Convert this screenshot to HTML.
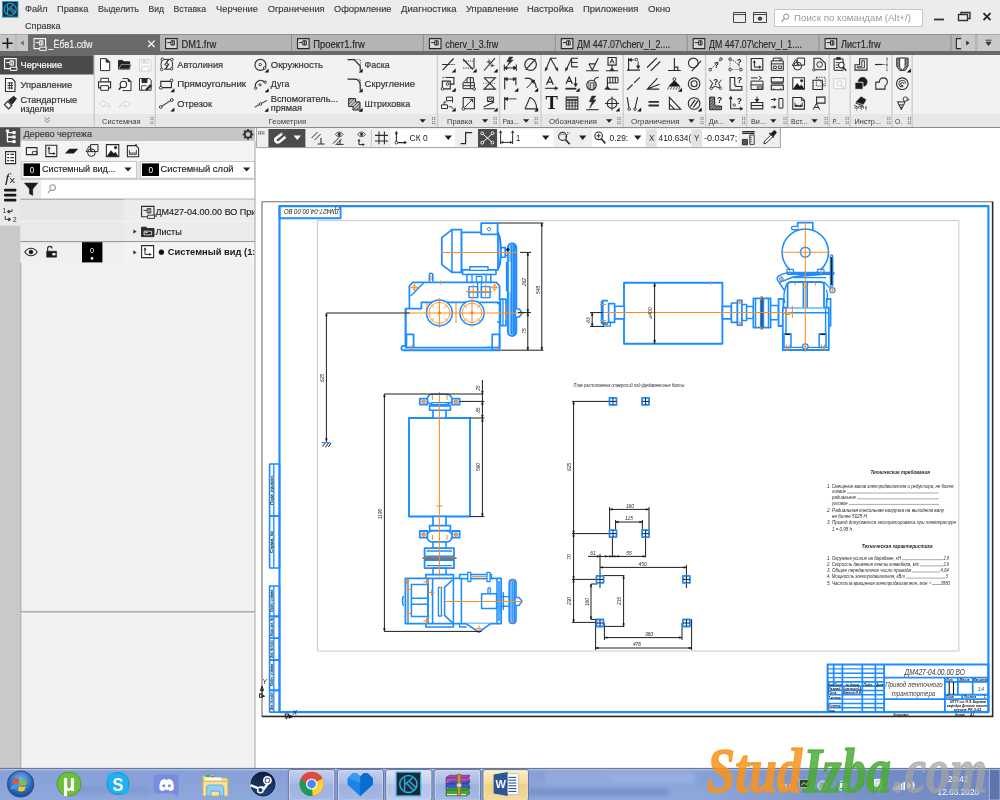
<!DOCTYPE html>
<html lang="ru"><head><meta charset="utf-8"><title>КОМПАС-3D</title>
<style>
html,body{margin:0;padding:0;background:#fff;overflow:hidden}
body{width:1000px;height:800px;font-family:"Liberation Sans",sans-serif}
svg{display:block;font-family:"Liberation Sans",sans-serif;will-change:transform;opacity:.9999}
</style></head><body>
<svg width="1000" height="800" viewBox="0 0 1000 800">
<rect x="0" y="0" width="1000" height="34" fill="#ececec" />
<rect x="2.4" y="1.5" width="15.6" height="15.6" fill="#26282c" stroke="#1aa3e6" stroke-width="0.9"/>
<circle cx="10.2" cy="9.3" r="6" fill="none" stroke="#1aa3e6" stroke-width="1.1"/>
<path d="M7.6 4.5V14 M7.6 9.6L13.2 4.9 M8.8 8.6L14 13.6 M10.5 7.6L15 11.8" stroke="#1aa3e6" stroke-width="1.1" fill="none" />
<text x="25" y="11.8" font-size="9.6" fill="#3a3a3a" textLength="22.6" lengthAdjust="spacingAndGlyphs" stroke="#3a3a3a" stroke-width="0.15" >Файл</text>
<text x="57" y="11.8" font-size="9.6" fill="#3a3a3a" textLength="31.4" lengthAdjust="spacingAndGlyphs" stroke="#3a3a3a" stroke-width="0.15" >Правка</text>
<text x="98" y="11.8" font-size="9.6" fill="#3a3a3a" textLength="41.0" lengthAdjust="spacingAndGlyphs" stroke="#3a3a3a" stroke-width="0.15" >Выделить</text>
<text x="148.5" y="11.8" font-size="9.6" fill="#3a3a3a" textLength="15.5" lengthAdjust="spacingAndGlyphs" stroke="#3a3a3a" stroke-width="0.15" >Вид</text>
<text x="173.5" y="11.8" font-size="9.6" fill="#3a3a3a" textLength="32.5" lengthAdjust="spacingAndGlyphs" stroke="#3a3a3a" stroke-width="0.15" >Вставка</text>
<text x="216" y="11.8" font-size="9.6" fill="#3a3a3a" textLength="42.0" lengthAdjust="spacingAndGlyphs" stroke="#3a3a3a" stroke-width="0.15" >Черчение</text>
<text x="267.7" y="11.8" font-size="9.6" fill="#3a3a3a" textLength="57.0" lengthAdjust="spacingAndGlyphs" stroke="#3a3a3a" stroke-width="0.15" >Ограничения</text>
<text x="334" y="11.8" font-size="9.6" fill="#3a3a3a" textLength="57.5" lengthAdjust="spacingAndGlyphs" stroke="#3a3a3a" stroke-width="0.15" >Оформление</text>
<text x="401" y="11.8" font-size="9.6" fill="#3a3a3a" textLength="55.5" lengthAdjust="spacingAndGlyphs" stroke="#3a3a3a" stroke-width="0.15" >Диагностика</text>
<text x="466" y="11.8" font-size="9.6" fill="#3a3a3a" textLength="52.5" lengthAdjust="spacingAndGlyphs" stroke="#3a3a3a" stroke-width="0.15" >Управление</text>
<text x="527" y="11.8" font-size="9.6" fill="#3a3a3a" textLength="46.5" lengthAdjust="spacingAndGlyphs" stroke="#3a3a3a" stroke-width="0.15" >Настройка</text>
<text x="583" y="11.8" font-size="9.6" fill="#3a3a3a" textLength="55.5" lengthAdjust="spacingAndGlyphs" stroke="#3a3a3a" stroke-width="0.15" >Приложения</text>
<text x="648" y="11.8" font-size="9.6" fill="#3a3a3a" textLength="22.5" lengthAdjust="spacingAndGlyphs" stroke="#3a3a3a" stroke-width="0.15" >Окно</text>
<text x="25" y="28.6" font-size="9.6" fill="#3a3a3a" textLength="35.5" lengthAdjust="spacingAndGlyphs" stroke="#3a3a3a" stroke-width="0.15" >Справка</text>
<path d="M733.5 12.5h12v10h-12z M733.5 14.5h12" stroke="#444" stroke-width="1" fill="none" />
<path d="M753.5 12.5h13v10h-13z M753.5 14.5h13" stroke="#444" stroke-width="1" fill="none" />
<circle cx="760" cy="18.6" r="2.2" fill="#444"/>
<rect x="774.5" y="9.5" width="148" height="17" fill="#ffffff" stroke="#c6c6c6" stroke-width="1"/>
<circle cx="786.2" cy="16.6" r="2.6" fill="none" stroke="#8a8a8a" stroke-width="1"/>
<line x1="784.4" y1="18.6" x2="781.6" y2="21.6" stroke="#8a8a8a" stroke-width="1.1" />
<text x="794" y="21.2" font-size="9.6" fill="#9a9a9a" textLength="117.0" lengthAdjust="spacingAndGlyphs" >Поиск по командам (Alt+/)</text>
<line x1="934" y1="19.5" x2="944" y2="19.5" stroke="#333" stroke-width="1.8" />
<path d="M958.5 14.5h9v6h-9z M961 14.5v-2h9v6h-2.5" stroke="#333" stroke-width="1.4" fill="none" />
<path d="M983.5 13.2l7 7M990.5 13.2l-7 7" stroke="#222" stroke-width="1.8" fill="none" />
<rect x="0" y="34" width="1000" height="21" fill="#6a6a6a" />
<rect x="0" y="34.5" width="1000" height="16.5" fill="#b4b4b4" />
<rect x="0" y="34.5" width="15.3" height="16.5" fill="#c6c6c6" />
<path d="M2.3 43.2h10.4M7.5 38v10.4" stroke="#1a1a1a" stroke-width="1.6" fill="none" />
<rect x="16.6" y="34.5" width="11.4" height="16.5" fill="#c6c6c6" />
<path d="M23.8 40.6v5l-3.4-2.5z" stroke="none" stroke-width="0" fill="#6a6a6a" />
<rect x="28" y="34.3" width="132" height="21" fill="#6a6a6a" />
<path d="M34.0 38.6h11.6v10h-11.6z" stroke="#f4f4f4" stroke-width="1.1" fill="none" />
<path d="M35.6 42.6h3.6 M39.4 40.8h3.4v4.2h-3.4z M41.199999999999996 40.8v4.2" stroke="#f4f4f4" stroke-width="1" fill="none" />
<path d="M39.699999999999996 47.2h6.6v3.2h-6.6z" stroke="#f4f4f4" stroke-width="1" fill="#6a6a6a" />
<text x="48.5" y="47.6" font-size="10.2" fill="#f4f4f4" textLength="44.0" lengthAdjust="spacingAndGlyphs" stroke="#f4f4f4" stroke-width="0.15" >_Ёбв1.cdw</text>
<path d="M148.2 40.6l6.4 6.4M154.6 40.6l-6.4 6.4" stroke="#fff" stroke-width="1.25" fill="none" />
<path d="M165.6 38.6h11.6v10h-11.6z" stroke="#2a2a2a" stroke-width="1.1" fill="#d8d8d8" />
<path d="M167.2 42.6h3.6 M171.0 40.8h3.4v4.2h-3.4z M172.8 40.8v4.2" stroke="#2a2a2a" stroke-width="1" fill="none" />
<text x="181.4" y="47.6" font-size="10.2" fill="#262626" textLength="35.0" lengthAdjust="spacingAndGlyphs" stroke="#262626" stroke-width="0.15" >DM1.frw</text>
<line x1="291.5" y1="34.5" x2="291.5" y2="51" stroke="#8e8e8e" stroke-width="1" />
<path d="M297.5 38.6h11.6v10h-11.6z" stroke="#2a2a2a" stroke-width="1.1" fill="#d8d8d8" />
<path d="M299.09999999999997 42.6h3.6 M302.9 40.8h3.4v4.2h-3.4z M304.7 40.8v4.2" stroke="#2a2a2a" stroke-width="1" fill="none" />
<text x="313.3" y="47.6" font-size="10.2" fill="#262626" textLength="51.5" lengthAdjust="spacingAndGlyphs" stroke="#262626" stroke-width="0.15" >Проект1.frw</text>
<line x1="423.4" y1="34.5" x2="423.4" y2="51" stroke="#8e8e8e" stroke-width="1" />
<path d="M429.4 38.6h11.6v10h-11.6z" stroke="#2a2a2a" stroke-width="1.1" fill="#d8d8d8" />
<path d="M430.99999999999994 42.6h3.6 M434.79999999999995 40.8h3.4v4.2h-3.4z M436.59999999999997 40.8v4.2" stroke="#2a2a2a" stroke-width="1" fill="none" />
<text x="445.2" y="47.6" font-size="10.2" fill="#262626" textLength="53.0" lengthAdjust="spacingAndGlyphs" stroke="#262626" stroke-width="0.15" >cherv_l_3.frw</text>
<line x1="555.3" y1="34.5" x2="555.3" y2="51" stroke="#8e8e8e" stroke-width="1" />
<path d="M561.3 38.6h11.6v10h-11.6z" stroke="#2a2a2a" stroke-width="1.1" fill="#d8d8d8" />
<path d="M562.9 42.6h3.6 M566.6999999999999 40.8h3.4v4.2h-3.4z M568.4999999999999 40.8v4.2" stroke="#2a2a2a" stroke-width="1" fill="none" />
<text x="577.0999999999999" y="47.6" font-size="10.2" fill="#262626" textLength="93.0" lengthAdjust="spacingAndGlyphs" stroke="#262626" stroke-width="0.15" >ДМ 447.07\cherv_l_2....</text>
<line x1="687.2" y1="34.5" x2="687.2" y2="51" stroke="#8e8e8e" stroke-width="1" />
<path d="M693.2 38.6h11.6v10h-11.6z" stroke="#2a2a2a" stroke-width="1.1" fill="#d8d8d8" />
<path d="M694.8000000000001 42.6h3.6 M698.6 40.8h3.4v4.2h-3.4z M700.4 40.8v4.2" stroke="#2a2a2a" stroke-width="1" fill="none" />
<text x="709.0" y="47.6" font-size="10.2" fill="#262626" textLength="93.0" lengthAdjust="spacingAndGlyphs" stroke="#262626" stroke-width="0.15" >ДМ 447.07\cherv_l_1....</text>
<line x1="819.1" y1="34.5" x2="819.1" y2="51" stroke="#8e8e8e" stroke-width="1" />
<path d="M825.1 38.6h11.6v10h-11.6z" stroke="#2a2a2a" stroke-width="1.1" fill="#d8d8d8" />
<path d="M826.7 42.6h3.6 M830.5 40.8h3.4v4.2h-3.4z M832.3 40.8v4.2" stroke="#2a2a2a" stroke-width="1" fill="none" />
<text x="840.9" y="47.6" font-size="10.2" fill="#262626" textLength="39.8" lengthAdjust="spacingAndGlyphs" stroke="#262626" stroke-width="0.15" >Лист1.frw</text>
<line x1="951" y1="34.5" x2="951" y2="51" stroke="#8e8e8e" stroke-width="1" />
<path d="M961 38.6h-4.6v10h4.6" stroke="#2a2a2a" stroke-width="1.1" fill="#d8d8d8" />
<rect x="961.5" y="34.5" width="13.5" height="16.5" fill="#cacaca" />
<path d="M966.2 40.4v5l3.4-2.5z" stroke="none" stroke-width="0" fill="#333" />
<rect x="977.5" y="34.5" width="22.5" height="16.5" fill="#cacaca" />
<path d="M985.5 40.2h6M986 42.2h5l-2.5 3.2z" stroke="#333" stroke-width="0.9" fill="#333" />
<rect x="0" y="55" width="1000" height="59" fill="#f2f2f2" />
<rect x="0" y="114" width="1000" height="13" fill="#e7e7e7" />
<rect x="0" y="127" width="1000" height="1.2" fill="#8c8c8c" />
<rect x="0" y="55.2" width="93.8" height="19.3" fill="#4a4a4a" />
<path d="M4.6 58.6h11.6v10h-11.6z" stroke="#fff" stroke-width="1.1" fill="none" />
<path d="M6.2 62.6h3.6 M10 60.8h3.4v4.2h-3.4z M11.8 60.8v4.2" stroke="#fff" stroke-width="1" fill="none" />
<path d="M10.3 67.2h6.6v3.2h-6.6z" stroke="#fff" stroke-width="1" fill="#4b4b4b" />
<text x="20.6" y="67.7" font-size="9.8" fill="#ffffff" textLength="41.5" lengthAdjust="spacingAndGlyphs" stroke="#ffffff" stroke-width="0.2" >Черчение</text>
<path d="M5.5 78.5h6.5l3 3v10h-9.5z" stroke="#2b2b2b" stroke-width="1.1" fill="#fff" />
<path d="M7.4 83h5.6M7.4 85.5h5.6M7.4 88h5.6M9.4 82v7.5M11.6 82v7.5" stroke="#2b2b2b" stroke-width="0.9" fill="none" />
<text x="20.6" y="87.5" font-size="9.8" fill="#333" textLength="51.5" lengthAdjust="spacingAndGlyphs" stroke="#333" stroke-width="0.2" >Управление</text>
<path d="M4.4 104.6l3.2-3.2 4.2 4.2-3.2 3.2z" stroke="#2b2b2b" stroke-width="1.2" fill="#fff" />
<path d="M8.4 100.6l5.4-4.4 2.6 2.6-4.4 5.4z" stroke="#2b2b2b" stroke-width="1" fill="#2b2b2b" />
<text x="20.6" y="102.9" font-size="9.8" fill="#333" textLength="56.5" lengthAdjust="spacingAndGlyphs" stroke="#333" stroke-width="0.2" >Стандартные</text>
<text x="20.6" y="111.6" font-size="9.8" fill="#333" textLength="33.5" lengthAdjust="spacingAndGlyphs" stroke="#333" stroke-width="0.2" >изделия</text>
<path d="M44.6 117.4l2.6 2.2 2.6-2.2M44.6 120.2l2.6 2.2 2.6-2.2" stroke="#777" stroke-width="0.9" fill="none" />
<rect x="93.6" y="55" width="1.4" height="72" fill="#cdcdcd" />
<rect x="154.60000000000002" y="55" width="1.4" height="72" fill="#cdcdcd" />
<text x="102" y="123.6" font-size="7.7" fill="#3c3c3c" textLength="38.5" lengthAdjust="spacingAndGlyphs" >Системная</text>
<rect x="150.3" y="117" width="1.1" height="1.1" fill="#777" />
<rect x="152.4" y="117" width="1.1" height="1.1" fill="#777" />
<rect x="150.3" y="118.8" width="1.1" height="1.1" fill="#777" />
<rect x="152.4" y="118.8" width="1.1" height="1.1" fill="#777" />
<rect x="150.3" y="121.2" width="1.1" height="1.1" fill="#777" />
<rect x="152.4" y="121.2" width="1.1" height="1.1" fill="#777" />
<rect x="150.3" y="123" width="1.1" height="1.1" fill="#777" />
<rect x="152.4" y="123" width="1.1" height="1.1" fill="#777" />
<path d="M100.5 58.6h5.600l3.600 3.600v8.400h-9.200z" stroke="#2b2b2b" stroke-width="1" fill="#fff" />
<path d="M106.1 58.6v3.600h3.600z" stroke="#2b2b2b" stroke-width="0.8" fill="#222" />
<path d="M118.5 60.4h4l1.2 1.4h6v7.4h-11.2z" stroke="#2b2b2b" stroke-width="1" fill="#222" />
<path d="M118.8 69.2l2.2-4.6h10.4l-2.2 4.6z" stroke="#f1f1f1" stroke-width="0.5" fill="#222" />
<path d="M139.5 59.5h10l1.6 1.6v10h-11.6z" stroke="#d4d4d4" stroke-width="1" fill="#f8f8f8" />
<path d="M141.8 59.5v3.6h6.4v-3.6 M141.6 71v-4.6h7.2v4.6" stroke="#d4d4d4" stroke-width="0.9" fill="none" />
<rect x="143" y="59.8" width="3" height="3" fill="#dcdcdc" />
<g transform="translate(0 -0.9)">
<path d="M100.8 82.6v-3.4h7.6v3.4" stroke="#2b2b2b" stroke-width="1" fill="#fff" />
<path d="M98.6 82.8h12v6h-12z" stroke="#2b2b2b" stroke-width="1.1" fill="#fff" />
<path d="M100.8 86.6h7.6v4.6h-7.6z" stroke="#2b2b2b" stroke-width="1" fill="#fff" />
<path d="M122.6 79.5h5.4l3 3v9h-8.4" stroke="#2b2b2b" stroke-width="1" fill="#fff" />
<path d="M128 79.5v3h3z" stroke="#2b2b2b" stroke-width="0.6" fill="#222" />
<circle cx="123.4" cy="85.3" r="3.2" fill="#fff" stroke="#2b2b2b" stroke-width="1.1"/>
<line x1="121" y1="87.8" x2="118.8" y2="90.6" stroke="#2b2b2b" stroke-width="1.5" />
<path d="M139.5 79.5h10l1.6 1.6v10h-11.6z" stroke="#2b2b2b" stroke-width="1" fill="#fff" />
<path d="M142 79.6v4h5v-4z" stroke="#2b2b2b" stroke-width="0.9" fill="#2b2b2b" />
<path d="M141.6 91v-4.4h5" stroke="#2b2b2b" stroke-width="0.9" fill="none" />
<path d="M145.600 90.2l4.600-4.800 1.400 1.400-4.600 4.600z" stroke="#2b2b2b" stroke-width="0.8" fill="#2b2b2b" />
</g>
<path d="M104 100.4l-4.8 3.4 4.8 3.4v-2.2c2.6-.2 4.6.6 6 2.6-.4-3.6-2.6-5.2-6-5.2z" stroke="#d6d6d6" stroke-width="1" fill="#f8f8f8" />
<path d="M125.4 100.4l4.8 3.4-4.8 3.4v-2.2c-2.6-.2-4.6.6-6 2.6.4-3.6 2.6-5.2 6-5.2z" stroke="#d6d6d6" stroke-width="1" fill="#f8f8f8" />
<text x="268.6" y="123.6" font-size="7.7" fill="#3c3c3c" textLength="37.5" lengthAdjust="spacingAndGlyphs" >Геометрия</text>
<path d="M419.6 119.2h6.2l-3.1 3.6z" stroke="none" stroke-width="0" fill="#222" />
<rect x="432" y="117" width="1.1" height="1.1" fill="#777" />
<rect x="434.1" y="117" width="1.1" height="1.1" fill="#777" />
<rect x="432" y="118.8" width="1.1" height="1.1" fill="#777" />
<rect x="434.1" y="118.8" width="1.1" height="1.1" fill="#777" />
<rect x="432" y="121.2" width="1.1" height="1.1" fill="#777" />
<rect x="434.1" y="121.2" width="1.1" height="1.1" fill="#777" />
<rect x="432" y="123" width="1.1" height="1.1" fill="#777" />
<rect x="434.1" y="123" width="1.1" height="1.1" fill="#777" />
<path d="M162 69c-1.6-3 -1-6.4 0-9.4 M164 59.4h7.4 M172 61.4c1 2 .6 4.6 0 6.6 M170.4 69.2h-6.4" stroke="#2b2b2b" stroke-width="1" fill="none" />
<path d="M168.4 59.8l-3 4.6h3l-2.8 4.8" stroke="#2b2b2b" stroke-width="1.3" fill="none" />
<circle cx="162.3" cy="59.3" r="1.3" fill="#f1f1f1" stroke="#2b2b2b" stroke-width="0.9"/>
<circle cx="171.8" cy="59.6" r="1.3" fill="#f1f1f1" stroke="#2b2b2b" stroke-width="0.9"/>
<circle cx="161.6" cy="69.4" r="1.3" fill="#f1f1f1" stroke="#2b2b2b" stroke-width="0.9"/>
<circle cx="171.6" cy="68.8" r="1.3" fill="#f1f1f1" stroke="#2b2b2b" stroke-width="0.9"/>
<circle cx="166.6" cy="64.4" r="1.3" fill="#f1f1f1" stroke="#2b2b2b" stroke-width="0.9"/>
<text x="177.3" y="67.5" font-size="9.8" fill="#333" textLength="45.8" lengthAdjust="spacingAndGlyphs" stroke="#333" stroke-width="0.2" >Автолиния</text>
<path d="M160.8 81.4h10.6v6.2h-10.6z" stroke="#2b2b2b" stroke-width="1.1" fill="none" />
<circle cx="171.6" cy="80.4" r="1.4" fill="#f1f1f1" stroke="#2b2b2b" stroke-width="0.9"/>
<circle cx="160.8" cy="87.8" r="1.4" fill="#f1f1f1" stroke="#2b2b2b" stroke-width="0.9"/>
<path d="M174.4 92.2h-4l4 -4z" stroke="none" stroke-width="0" fill="#111" />
<text x="177.3" y="87.1" font-size="9.8" fill="#333" textLength="68.8" lengthAdjust="spacingAndGlyphs" stroke="#333" stroke-width="0.2" >Прямоугольник</text>
<line x1="161.6" y1="106.4" x2="171" y2="100.4" stroke="#2b2b2b" stroke-width="1.1" />
<circle cx="160.8" cy="107" r="1.4" fill="#f1f1f1" stroke="#2b2b2b" stroke-width="0.9"/>
<circle cx="171.8" cy="100" r="1.4" fill="#f1f1f1" stroke="#2b2b2b" stroke-width="0.9"/>
<path d="M174.4 111.6h-4l4 -4z" stroke="none" stroke-width="0" fill="#111" />
<text x="177.3" y="106.7" font-size="9.8" fill="#333" textLength="34.6" lengthAdjust="spacingAndGlyphs" stroke="#333" stroke-width="0.2" >Отрезок</text>
<circle cx="260.4" cy="64.9" r="5.5" fill="none" stroke="#2b2b2b" stroke-width="1.1"/>
<circle cx="260.2" cy="64.6" r="1.2" fill="none" stroke="#2b2b2b" stroke-width="0.9"/>
<circle cx="264.6" cy="68" r="1.3" fill="#f1f1f1" stroke="#2b2b2b" stroke-width="0.9"/>
<path d="M268.6 72.6h-4l4 -4z" stroke="none" stroke-width="0" fill="#111" />
<text x="270.8" y="67.5" font-size="9.8" fill="#333" textLength="52.2" lengthAdjust="spacingAndGlyphs" stroke="#333" stroke-width="0.2" >Окружность</text>
<path d="M255.6 87.6c-1.6-5.6 5-9.6 8.8-5.6" stroke="#2b2b2b" stroke-width="1.1" fill="none" />
<circle cx="255.6" cy="88.2" r="1.2" fill="#f1f1f1" stroke="#2b2b2b" stroke-width="0.9"/>
<circle cx="265.2" cy="82.2" r="1.2" fill="#f1f1f1" stroke="#2b2b2b" stroke-width="0.9"/>
<circle cx="260" cy="84.8" r="1.1" fill="none" stroke="#2b2b2b" stroke-width="0.9"/>
<path d="M268.6 92.2h-4l4 -4z" stroke="none" stroke-width="0" fill="#111" />
<text x="270.8" y="87.1" font-size="9.8" fill="#333" textLength="18.6" lengthAdjust="spacingAndGlyphs" stroke="#333" stroke-width="0.2" >Дуга</text>
<line x1="254.6" y1="107.2" x2="267" y2="100.4" stroke="#2b2b2b" stroke-width="1" />
<circle cx="260.4" cy="104" r="1.3" fill="#f1f1f1" stroke="#2b2b2b" stroke-width="0.9"/>
<path d="M268.4 111.8h-4l4 -4z" stroke="none" stroke-width="0" fill="#111" />
<text x="270.8" y="102.1" font-size="9.8" fill="#333" textLength="67.4" lengthAdjust="spacingAndGlyphs" stroke="#333" stroke-width="0.2" >Вспомогатель...</text>
<text x="270.8" y="110.8" font-size="9.8" fill="#333" textLength="31.2" lengthAdjust="spacingAndGlyphs" stroke="#333" stroke-width="0.2" >прямая</text>
<path d="M347.6 59.6h6.6l6 6.4v4.4" stroke="#2b2b2b" stroke-width="1.2" fill="none" />
<path d="M354.4 59.6h6v6" stroke="#2b2b2b" stroke-width="0.8" fill="none" stroke-dasharray="1 1.2"/>
<path d="M362.6 72.6h-4l4 -4z" stroke="none" stroke-width="0" fill="#111" />
<text x="364.6" y="67.5" font-size="9.8" fill="#333" textLength="25.0" lengthAdjust="spacingAndGlyphs" stroke="#333" stroke-width="0.2" >Фаска</text>
<path d="M347.6 79.2h6.6c4 0 6 2.4 6 6.4v4.4" stroke="#2b2b2b" stroke-width="1.2" fill="none" />
<path d="M354.4 79.2h6v6" stroke="#2b2b2b" stroke-width="0.8" fill="none" stroke-dasharray="1 1.2"/>
<path d="M362.6 92.2h-4l4 -4z" stroke="none" stroke-width="0" fill="#111" />
<text x="364.6" y="87.1" font-size="9.8" fill="#333" textLength="50.4" lengthAdjust="spacingAndGlyphs" stroke="#333" stroke-width="0.2" >Скругление</text>
<path d="M348.6 98.6h7v3.4h4.4v8h-7v-3.4h-4.4z" stroke="#2b2b2b" stroke-width="1" fill="#c4c4c4" />
<path d="M349 101l2.4-2.4M349 104l5.4-5.4M350.6 106l5-5M353 107l5.4-5.4M353.6 109.6l6.4-6.4M356.4 110l3.6-3.6" stroke="#222" stroke-width="0.7" fill="none" />
<path d="M362.6 111.8h-4l4 -4z" stroke="none" stroke-width="0" fill="#111" />
<text x="364.6" y="106.7" font-size="9.8" fill="#333" textLength="45.6" lengthAdjust="spacingAndGlyphs" stroke="#333" stroke-width="0.2" >Штриховка</text>
<rect x="436.7" y="55" width="1.4" height="72" fill="#cdcdcd" />
<g transform="translate(448.1 64.5)">
<path d="M-6 0h7 M-5.5 5.6L5.5 -6" stroke="#2b2b2b" stroke-width="1.1" fill="none" />
<path d="M1 0h6" stroke="#2b2b2b" stroke-width="1" fill="none" stroke-dasharray="1.2 1"/>
</g>
<path d="M455.70000000000005 72.5h-4l4 -4z" stroke="none" stroke-width="0" fill="#111" />
<g transform="translate(469 64.5)">
<path d="M-6 -5.5L4 5 M5 -6.5V4" stroke="#2b2b2b" stroke-width="1.1" fill="none" />
<path d="M-6 -3.4h10 M-6 3.6h10" stroke="#2b2b2b" stroke-width="0.9" fill="none" stroke-dasharray="1.3 1"/>
</g>
<path d="M476.6 72.5h-4l4 -4z" stroke="none" stroke-width="0" fill="#111" />
<g transform="translate(490 64.5)">
<path d="M-6 6L5 -6.4" stroke="#2b2b2b" stroke-width="1.1" fill="none" />
<path d="M-3.4 -2.6h4.4 M0.4 1.2h4 M-1 -5v4.4 M2 -1v3.4" stroke="#2b2b2b" stroke-width="0.9" fill="none" />
</g>
<path d="M497.6 72.5h-4l4 -4z" stroke="none" stroke-width="0" fill="#111" />
<g transform="translate(448.1 83.7)">
<path d="M-2.6 -6.2h8.4v6.6h-3.4" stroke="#2b2b2b" stroke-width="1.1" fill="none" />
<path d="M-5.8 -2.6h8v7.8h-8z" stroke="#2b2b2b" stroke-width="1.1" fill="none" />
<circle cx="-5.6" cy="5.2" r="1.3" fill="#f1f1f1" stroke="#2b2b2b" stroke-width="0.9"/>
<circle cx="-0.4" cy="0.2" r="1.3" fill="none" stroke="#2b2b2b" stroke-width="0.9"/>
<path d="M-5.6 -5.4l2-1.4" stroke="#2b2b2b" stroke-width="0.9" fill="none" />
</g>
<path d="M455.70000000000005 91.7h-4l4 -4z" stroke="none" stroke-width="0" fill="#111" />
<g transform="translate(469 83.7)">
<path d="M-6 -1h11.4v6h-11.4z M-2 -1v-5h6.4v5 M-6 2h11 M1.4 -6v11" stroke="#2b2b2b" stroke-width="1" fill="none" />
<path d="M-5 -2l3-3.4" stroke="#2b2b2b" stroke-width="0.9" fill="none" />
<circle cx="5.2" cy="5.2" r="1.3" fill="#f1f1f1" stroke="#2b2b2b" stroke-width="0.9"/>
</g>
<g transform="translate(490 83.7)">
<path d="M-6 -6h11.4L-6 5.4h11.4L-6 -6" stroke="#2b2b2b" stroke-width="1.1" fill="none" />
<path d="M-7 -0.3h13" stroke="#2b2b2b" stroke-width="0.9" fill="none" stroke-dasharray="1.2 1" opacity=".6"/>
</g>
<g transform="translate(448.1 103.5)">
<path d="M-1.6 -6.4h6v3.6h-6z" stroke="#2b2b2b" stroke-width="1" fill="#fff" />
<path d="M-6.6 1.4h6v3.6h-6z" stroke="#2b2b2b" stroke-width="1" fill="#fff" />
<path d="M-4 1.4v-3h2.4 M4.4 -2.6v1.6 M0.6 3.2h1.6c1.4 0 2.6 1 2.6 2.4" stroke="#2b2b2b" stroke-width="1" fill="none" />
</g>
<path d="M455.70000000000005 111.5h-4l4 -4z" stroke="none" stroke-width="0" fill="#111" />
<g transform="translate(469 103.5)">
<path d="M-5.8 -6h11.2v11.2h-11.2z" stroke="#2b2b2b" stroke-width="1.1" fill="none" />
<path d="M-4.6 4L3.4 -4 M0.6 -4.2h3v3" stroke="#2b2b2b" stroke-width="1" fill="none" />
<circle cx="-5.6" cy="5.2" r="1.4" fill="#f1f1f1" stroke="#2b2b2b" stroke-width="0.9"/>
</g>
<g transform="translate(490 103.5)">
<path d="M-2.6 -6.4h6v4.4h-6z" stroke="#2b2b2b" stroke-width="1" fill="none" />
<path d="M-2.6 -2l6-4.4 M-2.6 -6.4l6 4.4" stroke="#2b2b2b" stroke-width="0.7" fill="none" />
<path d="M-6.4 3.4L4 -1.4 M-6.4 5.2h11.4" stroke="#2b2b2b" stroke-width="1.1" fill="none" />
</g>
<path d="M497.6 111.5h-4l4 -4z" stroke="none" stroke-width="0" fill="#111" />
<text x="447" y="123.6" font-size="7.7" fill="#3c3c3c" textLength="25.4" lengthAdjust="spacingAndGlyphs" >Правка</text>
<path d="M482 119.2h6.2l-3.1 3.6z" stroke="none" stroke-width="0" fill="#222" />
<rect x="493.6" y="117" width="1.1" height="1.1" fill="#777" />
<rect x="495.70000000000005" y="117" width="1.1" height="1.1" fill="#777" />
<rect x="493.6" y="118.8" width="1.1" height="1.1" fill="#777" />
<rect x="495.70000000000005" y="118.8" width="1.1" height="1.1" fill="#777" />
<rect x="493.6" y="121.2" width="1.1" height="1.1" fill="#777" />
<rect x="495.70000000000005" y="121.2" width="1.1" height="1.1" fill="#777" />
<rect x="493.6" y="123" width="1.1" height="1.1" fill="#777" />
<rect x="495.70000000000005" y="123" width="1.1" height="1.1" fill="#777" />
<rect x="498.90000000000003" y="55" width="1.4" height="72" fill="#cdcdcd" />
<g transform="translate(510.3 64.5)">
<path d="M2.6 -7.4h-3.6l-2.4 4.6h2.6l-2 4 5.6-5.6h-2.8z" stroke="#2b2b2b" stroke-width="0.6" fill="#2b2b2b" />
<path d="M-6 0v6.4 M6 0v6.4 M-6 3.4h12 M-6 3.4l2.6-1.6v3.2z M6 3.4l-2.6-1.6v3.2z" stroke="#2b2b2b" stroke-width="1" fill="#2b2b2b" />
</g>
<g transform="translate(530.6 64.5)">
<circle cx="0" cy="0" r="5.8" fill="none" stroke="#2b2b2b" stroke-width="1.2"/>
<path d="M-5 5.4L5 -5.6" stroke="#2b2b2b" stroke-width="1.2" fill="none" />
</g>
<g transform="translate(510.3 83.7)">
<path d="M-5.6 -6.4v12 M5.6 -6.4v8" stroke="#2b2b2b" stroke-width="1.1" fill="none" />
<path d="M-5.6 -4.6h11.2 M-5.6 -4.6l2.6-1.5v3z M5.6 -4.6l-2.6-1.5v3z" stroke="#2b2b2b" stroke-width="0.9" fill="#2b2b2b" />
</g>
<path d="M518.3 91.7h-4l4 -4z" stroke="none" stroke-width="0" fill="#111" />
<g transform="translate(530.6 83.7)">
<path d="M-6 -5.2c6.4-1.6 11.4 3 11.6 9.6" stroke="#2b2b2b" stroke-width="1.1" fill="none" />
<path d="M-4 4.4L3.4 -3.2 M3.8 -3.6l-3.2 .8 2.4 2.4z" stroke="#2b2b2b" stroke-width="1" fill="#2b2b2b" />
</g>
<path d="M538.2 91.7h-4l4 -4z" stroke="none" stroke-width="0" fill="#111" />
<g transform="translate(510.3 103.5)">
<path d="M-5.6 -6.4v12.6" stroke="#2b2b2b" stroke-width="1.1" fill="none" />
<path d="M-5.6 -4.6h11.8 M-5.6 -4.6l2.8-1.5v3z" stroke="#2b2b2b" stroke-width="0.9" fill="#2b2b2b" />
</g>
<g transform="translate(530.6 103.5)">
<path d="M-5.6 5.4L-0.6 -6.2 M-5.6 5.4h11.6 M-0.6 -6c4 1.6 6.6 6 6.6 11.4" stroke="#2b2b2b" stroke-width="1.1" fill="none" />
</g>
<path d="M538.2 111.5h-4l4 -4z" stroke="none" stroke-width="0" fill="#111" />
<text x="502.4" y="123.6" font-size="7.7" fill="#3c3c3c" textLength="16.6" lengthAdjust="spacingAndGlyphs" >Раз...</text>
<path d="M523 119.2h6.2l-3.1 3.6z" stroke="none" stroke-width="0" fill="#222" />
<rect x="534.6" y="117" width="1.1" height="1.1" fill="#777" />
<rect x="536.7" y="117" width="1.1" height="1.1" fill="#777" />
<rect x="534.6" y="118.8" width="1.1" height="1.1" fill="#777" />
<rect x="536.7" y="118.8" width="1.1" height="1.1" fill="#777" />
<rect x="534.6" y="121.2" width="1.1" height="1.1" fill="#777" />
<rect x="536.7" y="121.2" width="1.1" height="1.1" fill="#777" />
<rect x="534.6" y="123" width="1.1" height="1.1" fill="#777" />
<rect x="536.7" y="123" width="1.1" height="1.1" fill="#777" />
<rect x="540.3" y="55" width="1.4" height="72" fill="#cdcdcd" />
<g transform="translate(551.5 64.5)">
<path d="M-5.8 5.8L-1 -6.2h6 M-1 -6.2L5.8 5.8" stroke="#2b2b2b" stroke-width="1.1" fill="none" />
<path d="M-6.4 6.6l.4-3.4 2.2 1z M6.4 6.6l-.4-3.4 -2.2 1z" stroke="#2b2b2b" stroke-width="0.6" fill="#2b2b2b" />
</g>
<g transform="translate(572 64.5)">
<path d="M-6 5.8L-0.4 -6.2h6.4 M-0.4 -6.2V2.4 M-0.4 -2h6 M-0.4 2.4h6.4" stroke="#2b2b2b" stroke-width="1.1" fill="none" />
<path d="M-6.6 6.6l.4-3.4 2.2 1z" stroke="#2b2b2b" stroke-width="0.6" fill="#2b2b2b" />
</g>
<g transform="translate(592.3 64.5)">
<path d="M-6.2 6.2h12.6 M-3.4 -0.6h6.6 M-3.4 -0.6L0 5.6L6 -6.6" stroke="#2b2b2b" stroke-width="1.1" fill="none" />
</g>
<g transform="translate(612 64.5)">
<path d="M-4 -7h8.2v7.6h-8.2z" stroke="#2b2b2b" stroke-width="1.1" fill="none" />
<path d="M-2 -1l2-4.8 2 4.8 M-1.3 -2.8h2.6" stroke="#2b2b2b" stroke-width="0.9" fill="none" />
<path d="M0 .6v3.4 M-6.2 6.3h12.4" stroke="#2b2b2b" stroke-width="1.1" fill="none" />
<path d="M0 3.4l2.6 2.8h-5.2z" stroke="#2b2b2b" stroke-width="0.5" fill="#2b2b2b" />
</g>
<g transform="translate(551.5 83.7)">
<path d="M-5 1L-1.6 -6.6L1.8 1 M-3.8 -1.6h4.4" stroke="#2b2b2b" stroke-width="1.2" fill="none" />
<path d="M-6.4 4.6h11" stroke="#2b2b2b" stroke-width="1.1" fill="none" />
<path d="M6.6 4.6l-3-1.7v3.4z" stroke="#2b2b2b" stroke-width="0.5" fill="#2b2b2b" />
</g>
<g transform="translate(572 83.7)">
<path d="M-6 0L-2.8 -6.8L.4 0 M-4.8 -2.4h4" stroke="#2b2b2b" stroke-width="1.2" fill="none" />
<path d="M3.6 -6.6v8" stroke="#2b2b2b" stroke-width="1.1" fill="none" />
<path d="M3.6 3.2l-1.8-3.2h3.6z" stroke="#2b2b2b" stroke-width="0.5" fill="#2b2b2b" />
<path d="M-6.6 5h11" stroke="#2b2b2b" stroke-width="1.8" fill="none" />
</g>
<path d="M579.6 91.7h-4l4 -4z" stroke="none" stroke-width="0" fill="#111" />
<g transform="translate(592.3 83.7)">
<circle cx="-0.8" cy="1.4" r="4.8" fill="none" stroke="#2b2b2b" stroke-width="1.1"/>
<path d="M-3.4 -2.4v7.6 M-1.6 -1h2.6v7 M-1.6 -1v7 M2.6 -1.6v6" stroke="#2b2b2b" stroke-width="0.8" fill="none" />
<path d="M1.6 -2.8c.6-2.4 2-3.6 4.8-3.6" stroke="#2b2b2b" stroke-width="1.1" fill="none" />
</g>
<g transform="translate(612 83.7)">
<path d="M-4.6 -6.4v12 M-4.6 5.6h11" stroke="#2b2b2b" stroke-width="1.1" fill="none" />
<path d="M-4.6 -6.4h10.6v5.6h-10.6 M-2 -6.4v5.6 M.8 -6.4v5.6 M3.4 -6.4v5.6" stroke="#2b2b2b" stroke-width="1" fill="none" />
<path d="M-4.6 2.6l2.8 3h-5.6z" stroke="#2b2b2b" stroke-width="0.5" fill="#2b2b2b" />
</g>
<text x="545.6" y="108.6" font-size="18" fill="#1a1a1a" textLength="12.4" lengthAdjust="spacingAndGlyphs" font-weight="bold" font-family="Liberation Serif, serif" >T</text>
<g transform="translate(572 103.5)">
<path d="M-5.8 -6.4h11.6v12.2h-11.6z" stroke="#2b2b2b" stroke-width="1.1" fill="#d8d8d8" />
<path d="M-5.8 -3.6h11.6" stroke="#2b2b2b" stroke-width="1.6" fill="none" />
<path d="M-5.8 -0.6h11.6 M-5.8 2.4h11.6 M-2.8 -3.6v9.4 M.2 -3.6v9.4 M3.2 -3.6v9.4" stroke="#2b2b2b" stroke-width="0.8" fill="none" />
</g>
<g transform="translate(592.3 103.5)">
<path d="M3.4 -7.4h-3.8l-2.6 5.6h2.8l-2.4 6.4 6.2-8.2h-3z" stroke="#2b2b2b" stroke-width="0.6" fill="#2b2b2b" />
<path d="M-6.2 6.2h12.4" stroke="#2b2b2b" stroke-width="1.1" fill="none" />
</g>
<g transform="translate(612 103.5)">
<circle cx="0" cy="0" r="4.8" fill="none" stroke="#2b2b2b" stroke-width="1.1"/>
<path d="M-7 0h14 M0 -7v14" stroke="#2b2b2b" stroke-width="1" fill="none" />
</g>
<path d="M619.6 111.5h-4l4 -4z" stroke="none" stroke-width="0" fill="#111" />
<text x="549" y="123.6" font-size="7.7" fill="#3c3c3c" textLength="48.0" lengthAdjust="spacingAndGlyphs" >Обозначения</text>
<path d="M606 119.2h6.2l-3.1 3.6z" stroke="none" stroke-width="0" fill="#222" />
<rect x="617.4" y="117" width="1.1" height="1.1" fill="#777" />
<rect x="619.5" y="117" width="1.1" height="1.1" fill="#777" />
<rect x="617.4" y="118.8" width="1.1" height="1.1" fill="#777" />
<rect x="619.5" y="118.8" width="1.1" height="1.1" fill="#777" />
<rect x="617.4" y="121.2" width="1.1" height="1.1" fill="#777" />
<rect x="619.5" y="121.2" width="1.1" height="1.1" fill="#777" />
<rect x="617.4" y="123" width="1.1" height="1.1" fill="#777" />
<rect x="619.5" y="123" width="1.1" height="1.1" fill="#777" />
<rect x="622.5" y="55" width="1.4" height="72" fill="#cdcdcd" />
<g transform="translate(633.6 64.5)">
<path d="M-5 -6.6v13 M-6.6 5.6h13" stroke="#2b2b2b" stroke-width="1.1" fill="none" />
<path d="M-4.6 -4.6h5.4 M-4.8 -4.6l2.6-1.4v2.8z M4.6 -3v6 M4.6 4.2l-1.5-2.8h3z" stroke="#2b2b2b" stroke-width="0.9" fill="#2b2b2b" />
<circle cx="2.8" cy="-5" r="1.3" fill="#f1f1f1" stroke="#2b2b2b" stroke-width="0.9"/>
</g>
<g transform="translate(653.5 64.5)">
<path d="M-6.4 3L3.4 -6.6 M-2.8 6.4L6.8 -3" stroke="#2b2b2b" stroke-width="1.2" fill="none" />
</g>
<g transform="translate(674.4 64.5)">
<path d="M-6.4 6h12.8 M0 -6.6v12.6 M0 2.6h3.4v3.4" stroke="#2b2b2b" stroke-width="1.1" fill="none" />
</g>
<g transform="translate(694.1 64.5)">
<circle cx="-0.8" cy="-1.6" r="4.8" fill="none" stroke="#2b2b2b" stroke-width="1.1"/>
<path d="M-2.4 6.6L7 -3.6" stroke="#2b2b2b" stroke-width="1.1" fill="none" />
</g>
<g transform="translate(633.6 83.7)">
<path d="M-6.4 6.2L-1 .8 M.6 -.8L6.2 -6.4" stroke="#2b2b2b" stroke-width="1.2" fill="none" />
</g>
<g transform="translate(653.5 83.7)">
<path d="M4 -5.6L-6.2 5.4h12 M-6.2 5.4L6 .6" stroke="#2b2b2b" stroke-width="1.1" fill="none" />
</g>
<g transform="translate(674.4 83.7)">
<path d="M0 -3.4l5.6 6h-11.2z" stroke="#2b2b2b" stroke-width="0.6" fill="#1a1a1a" />
<circle cx="0" cy="-4.6" r="1.4" fill="#f1f1f1" stroke="#2b2b2b" stroke-width="0.9"/>
<path d="M-5.6 3.4l-1.2 2.6 M-2.8 3.4l-1.2 2.6 M0 3.4l-1.2 2.6 M2.8 3.4l-1.2 2.6 M5.4 3.4l-1.2 2.6" stroke="#2b2b2b" stroke-width="0.8" fill="none" />
</g>
<path d="M682.0 91.7h-4l4 -4z" stroke="none" stroke-width="0" fill="#111" />
<g transform="translate(694.1 83.7)">
<circle cx="0" cy="0" r="5.8" fill="none" stroke="#2b2b2b" stroke-width="1.1"/>
<circle cx="0" cy="0" r="3" fill="none" stroke="#2b2b2b" stroke-width="1.1"/>
</g>
<g transform="translate(633.6 103.5)">
<path d="M-6.4 -6.4L-4.6 4.4 M4 -6.4L1.6 4.4" stroke="#2b2b2b" stroke-width="1.1" fill="none" />
<circle cx="-4.4" cy="5.6" r="1.3" fill="#f1f1f1" stroke="#2b2b2b" stroke-width="0.9"/>
<circle cx="1.4" cy="5.6" r="1.3" fill="#f1f1f1" stroke="#2b2b2b" stroke-width="0.9"/>
</g>
<path d="M641.2 111.5h-4l4 -4z" stroke="none" stroke-width="0" fill="#111" />
<g transform="translate(653.5 103.5)">
<path d="M-5 -1.6h10.4 M-5 2h10.4" stroke="#2b2b2b" stroke-width="1.8" fill="none" />
</g>
<g transform="translate(674.4 103.5)">
<path d="M-5 -6.2v12h11.4z M-5 .6l5 5" stroke="#2b2b2b" stroke-width="1.1" fill="none" />
</g>
<g transform="translate(694.1 103.5)">
<circle cx="0" cy="0" r="5.8" fill="none" stroke="#2b2b2b" stroke-width="1.1"/>
<path d="M-3.6 3L1 -3.6 M-.8 4L3.8 -2.6" stroke="#2b2b2b" stroke-width="1.3" fill="none" />
</g>
<path d="M701.7 111.5h-4l4 -4z" stroke="none" stroke-width="0" fill="#111" />
<text x="631" y="123.6" font-size="7.7" fill="#3c3c3c" textLength="48.5" lengthAdjust="spacingAndGlyphs" >Ограничения</text>
<path d="M688.4 119.2h6.2l-3.1 3.6z" stroke="none" stroke-width="0" fill="#222" />
<rect x="700.4" y="117" width="1.1" height="1.1" fill="#777" />
<rect x="702.5" y="117" width="1.1" height="1.1" fill="#777" />
<rect x="700.4" y="118.8" width="1.1" height="1.1" fill="#777" />
<rect x="702.5" y="118.8" width="1.1" height="1.1" fill="#777" />
<rect x="700.4" y="121.2" width="1.1" height="1.1" fill="#777" />
<rect x="702.5" y="121.2" width="1.1" height="1.1" fill="#777" />
<rect x="700.4" y="123" width="1.1" height="1.1" fill="#777" />
<rect x="702.5" y="123" width="1.1" height="1.1" fill="#777" />
<rect x="704.9" y="55" width="1.4" height="72" fill="#cdcdcd" />
<g transform="translate(715.6 64.5)">
<path d="M-5 4.8L5 -5" stroke="#2b2b2b" stroke-width="0.9" fill="none" stroke-dasharray="1.6 1.2"/>
<circle cx="-5.4" cy="5.2" r="1.3" fill="#f1f1f1" stroke="#2b2b2b" stroke-width="0.9"/>
<circle cx="5.4" cy="-5.4" r="1.3" fill="#f1f1f1" stroke="#2b2b2b" stroke-width="0.9"/>
<text x="-1.6" y="3.6" font-size="9" fill="#1a1a1a" textLength="4.9" lengthAdjust="spacingAndGlyphs" font-weight="bold" >?</text>
</g>
<g transform="translate(735.7 64.5)">
<path d="M-5.6 -5c4.6 1 8.6 4.6 10.4 9.6" stroke="#2b2b2b" stroke-width="0.9" fill="none" stroke-dasharray="1.6 1"/>
<path d="M-5.6 -4v9h9" stroke="#2b2b2b" stroke-width="0.7" fill="none" stroke-dasharray="1 1.2"/>
<circle cx="-5.6" cy="-5.4" r="1.3" fill="#f1f1f1" stroke="#2b2b2b" stroke-width="0.9"/>
<circle cx="-5.6" cy="5.2" r="1.3" fill="#f1f1f1" stroke="#2b2b2b" stroke-width="0.9"/>
<circle cx="5.2" cy="5.2" r="1.3" fill="#f1f1f1" stroke="#2b2b2b" stroke-width="0.9"/>
<text x="1" y="0.6" font-size="9" fill="#1a1a1a" textLength="4.9" lengthAdjust="spacingAndGlyphs" font-weight="bold" >?</text>
</g>
<g transform="translate(715.6 83.7)">
<path d="M-6 -4l3 3.4-2.6 5.4 5.4-2.2 5.6 2.2-2.4-5 2.8-3.8" stroke="#2b2b2b" stroke-width="1" fill="none" />
<circle cx="-4.4" cy="4.6" r="1.2" fill="#f1f1f1" stroke="#2b2b2b" stroke-width="0.8"/>
<circle cx="4.8" cy="4.6" r="1.2" fill="#f1f1f1" stroke="#2b2b2b" stroke-width="0.8"/>
<text x="-2.4" y="1.2" font-size="9" fill="#1a1a1a" textLength="4.9" lengthAdjust="spacingAndGlyphs" font-weight="bold" >?</text>
</g>
<g transform="translate(735.7 83.7)">
<path d="M-5.6 -6.2h4.6v6.4c0 1.6 1 2.6 2.6 2.6h4.6v3.6h-11.8z" stroke="#2b2b2b" stroke-width="1.1" fill="none" />
<text x="1.4" y="-0.4" font-size="9.5" fill="#1a1a1a" textLength="5.2" lengthAdjust="spacingAndGlyphs" font-weight="bold" >?</text>
</g>
<g transform="translate(715.6 103.5)">
<path d="M-6 -6.4h5v7c0 1.2.8 2 2 2h5v3.6h-12z" stroke="#2b2b2b" stroke-width="1" fill="#8a8a8a" />
<path d="M-6 -4l2.4-2.4M-6 -1l5-5M-6 2l5-5M-6 5l6-6M-4 6l5-5M-1 6l4-4M2 6l3.6-3.6" stroke="#2b2b2b" stroke-width="0.6" fill="none" />
<text x="1.4" y="-0.4" font-size="9.5" fill="#1a1a1a" textLength="5.2" lengthAdjust="spacingAndGlyphs" font-weight="bold" >?</text>
</g>
<g transform="translate(735.7 103.5)">
<path d="M-5 -6.4v11.6h11.6" stroke="#2b2b2b" stroke-width="1.1" fill="none" />
<path d="M-5 -7.4l-1.6 3h3.2z M7.4 5.2l-3-1.6v3.2z" stroke="#2b2b2b" stroke-width="0.4" fill="#2b2b2b" />
<circle cx="-1.4" cy="1.6" r="1.2" fill="none" stroke="#2b2b2b" stroke-width="0.8"/>
<text x="1" y="0" font-size="9.5" fill="#1a1a1a" textLength="5.2" lengthAdjust="spacingAndGlyphs" font-weight="bold" >?</text>
</g>
<text x="708.8" y="123.6" font-size="7.7" fill="#3c3c3c" textLength="15.0" lengthAdjust="spacingAndGlyphs" >Ди...</text>
<path d="M729 119.2h6.2l-3.1 3.6z" stroke="none" stroke-width="0" fill="#222" />
<rect x="742" y="117" width="1.1" height="1.1" fill="#777" />
<rect x="744.1" y="117" width="1.1" height="1.1" fill="#777" />
<rect x="742" y="118.8" width="1.1" height="1.1" fill="#777" />
<rect x="744.1" y="118.8" width="1.1" height="1.1" fill="#777" />
<rect x="742" y="121.2" width="1.1" height="1.1" fill="#777" />
<rect x="744.1" y="121.2" width="1.1" height="1.1" fill="#777" />
<rect x="742" y="123" width="1.1" height="1.1" fill="#777" />
<rect x="744.1" y="123" width="1.1" height="1.1" fill="#777" />
<rect x="745.9" y="55" width="1.4" height="72" fill="#cdcdcd" />
<g transform="translate(757 64.5)">
<path d="M-5.8 -6h11.6v11.6h-11.6z" stroke="#2b2b2b" stroke-width="1.1" fill="none" />
<path d="M-2.6 -3.4v6h6" stroke="#2b2b2b" stroke-width="1" fill="none" />
<path d="M-2.6 -4.2l-1.3 2.4h2.6z M4.4 2.6l-2.4-1.3v2.6z" stroke="#2b2b2b" stroke-width="0.3" fill="#2b2b2b" />
</g>
<g transform="translate(777.3 64.5)">
<path d="M-6 -3.6h12v9.4h-12z M-6 -.6h12 M-4 -6.4h6.6v2.8 M-4 -6.4v2.8" stroke="#2b2b2b" stroke-width="1" fill="none" />
<path d="M-4 1.6h3v2.4h-3z M1 1.6h3.4v2.4h-3.4z" stroke="#2b2b2b" stroke-width="0.9" fill="none" />
<path d="M3 -7l2.4 1.6-2.4 1.6" stroke="#2b2b2b" stroke-width="0.9" fill="none" />
</g>
<g transform="translate(757 83.7)">
<path d="M-6 -2.6h12v8.4h-12z M-6 1.2h12 M-6 -5.8h6.6" stroke="#2b2b2b" stroke-width="1" fill="none" />
<path d="M.4 3h5v2.4h-5z" stroke="#2b2b2b" stroke-width="0.8" fill="#bbb" />
<path d="M2 -7.4l2.6 1.6-2.6 1.6" stroke="#2b2b2b" stroke-width="0.9" fill="none" />
</g>
<g transform="translate(777.3 83.7)">
<path d="M-6 -6.2h12v4.6h-12z M-6 1.4h12v4.6h-12z" stroke="#2b2b2b" stroke-width="1.1" fill="none" />
<path d="M-3.4 -6.2v1.4 M3.4 -6.2v1.4 M-3.4 6v-1.4 M3.4 6v-1.4 M-6 -.2h12" stroke="#2b2b2b" stroke-width="0.8" fill="none" />
</g>
<g transform="translate(757 103.5)">
<path d="M-5.8 -1h11.6v3h-11.6z M-5.8 2h11.6v3.4h-11.6z" stroke="#2b2b2b" stroke-width="1.1" fill="none" />
<path d="M0 -7v4.6 M0 -1.6l-1.8-2.6h3.6z" stroke="#2b2b2b" stroke-width="0.9" fill="#2b2b2b" />
</g>
<g transform="translate(777.3 103.5)">
<path d="M1.6 -5h4v9.6h-4z" stroke="#2b2b2b" stroke-width="1" fill="none" />
<path d="M-6.4 -4h4.6 M-6.4 3.6h4.6" stroke="#2b2b2b" stroke-width="1" fill="none" />
<path d="M-1 -4l-2.4-1.5v3z M-1 3.6l-2.4-1.5v3z" stroke="#2b2b2b" stroke-width="0.3" fill="#2b2b2b" />
</g>
<text x="751" y="123.6" font-size="7.7" fill="#3c3c3c" textLength="15.0" lengthAdjust="spacingAndGlyphs" >Ви...</text>
<path d="M770.2 119.2h6.2l-3.1 3.6z" stroke="none" stroke-width="0" fill="#222" />
<rect x="783.4" y="117" width="1.1" height="1.1" fill="#777" />
<rect x="785.5" y="117" width="1.1" height="1.1" fill="#777" />
<rect x="783.4" y="118.8" width="1.1" height="1.1" fill="#777" />
<rect x="785.5" y="118.8" width="1.1" height="1.1" fill="#777" />
<rect x="783.4" y="121.2" width="1.1" height="1.1" fill="#777" />
<rect x="785.5" y="121.2" width="1.1" height="1.1" fill="#777" />
<rect x="783.4" y="123" width="1.1" height="1.1" fill="#777" />
<rect x="785.5" y="123" width="1.1" height="1.1" fill="#777" />
<rect x="786.9" y="55" width="1.4" height="72" fill="#cdcdcd" />
<g transform="translate(798.6 64.5)">
<path d="M-1.4 -6.4h7.4v7h-7.4z" stroke="#2b2b2b" stroke-width="1" fill="none" />
<circle cx="-1" cy="1.6" r="4" fill="none" stroke="#2b2b2b" stroke-width="1"/>
<path d="M-6.4 1l3.4-6 3.2 6z" stroke="#2b2b2b" stroke-width="0.9" fill="none" />
</g>
<g transform="translate(819 64.5)">
<path d="M-5 5.2v-11.4h6l5.4 5v6.4z" stroke="#2b2b2b" stroke-width="1.1" fill="none" />
<circle cx="0.6" cy="0" r="2.8" fill="none" stroke="#2b2b2b" stroke-width="1"/>
<circle cx="-5.2" cy="5.4" r="1.2" fill="#f1f1f1" stroke="#2b2b2b" stroke-width="0.8"/>
</g>
<g transform="translate(798.6 83.7)">
<path d="M-5.8 -6h11.6v11.6h-11.6z" stroke="#2b2b2b" stroke-width="1.1" fill="#fff" />
<path d="M-5.4 5.2l4-5.6 2.6 3 1.6-1.6 2.8 4.2z" stroke="#2b2b2b" stroke-width="0.3" fill="#1a1a1a" />
<circle cx="3" cy="-3" r="1.2" fill="#1a1a1a" stroke="#2b2b2b" stroke-width="0.5"/>
</g>
<g transform="translate(819 83.7)">
<path d="M-6 -3.4h9.4v9.2h-9.4z" stroke="#2b2b2b" stroke-width="1.1" fill="none" />
<path d="M-2.6 -6.4h8.8v8.8h-8.8z M-2.6 -6.4l8.8 8.8" stroke="#2b2b2b" stroke-width="0.8" fill="none" stroke-dasharray="1.4 1"/>
</g>
<g transform="translate(798.6 103.5)">
<path d="M-5.8 -6h8.6l3 3v8.6h-11.6z" stroke="#2b2b2b" stroke-width="1.1" fill="none" />
<path d="M2.8 -6v3h3" stroke="#2b2b2b" stroke-width="0.8" fill="none" />
<path d="M-3.6 -1v4h7.2v-4 M-3.6 2h7.2" stroke="#2b2b2b" stroke-width="0.8" fill="none" />
<path d="M-3.6 2l1.6-1v2z M3.6 2l-1.6-1v2z" stroke="#2b2b2b" stroke-width="0.3" fill="#2b2b2b" />
</g>
<g transform="translate(819 103.5)">
<path d="M-2.4 -6.4h8.4v6h-8.4z M-2.4 -6.4v7.4" stroke="#2b2b2b" stroke-width="1.1" fill="none" />
<path d="M-6 6.2l3.4-6 3.4 6 M-4.6 4h4.2" stroke="#2b2b2b" stroke-width="1" fill="none" />
</g>
<text x="791" y="123.6" font-size="7.7" fill="#3c3c3c" textLength="16.5" lengthAdjust="spacingAndGlyphs" >Вст...</text>
<path d="M811.4 119.2h6.2l-3.1 3.6z" stroke="none" stroke-width="0" fill="#222" />
<rect x="824.6" y="117" width="1.1" height="1.1" fill="#777" />
<rect x="826.7" y="117" width="1.1" height="1.1" fill="#777" />
<rect x="824.6" y="118.8" width="1.1" height="1.1" fill="#777" />
<rect x="826.7" y="118.8" width="1.1" height="1.1" fill="#777" />
<rect x="824.6" y="121.2" width="1.1" height="1.1" fill="#777" />
<rect x="826.7" y="121.2" width="1.1" height="1.1" fill="#777" />
<rect x="824.6" y="123" width="1.1" height="1.1" fill="#777" />
<rect x="826.7" y="123" width="1.1" height="1.1" fill="#777" />
<rect x="828.5" y="55" width="1.4" height="72" fill="#cdcdcd" />
<g transform="translate(839.7 64.5)">
<path d="M-5.6 -5.6h9v11.4h-9z" stroke="#2b2b2b" stroke-width="1" fill="none" />
<path d="M-3 -7h3.6v2h-3.6z" stroke="#2b2b2b" stroke-width="0.8" fill="#2b2b2b" />
<path d="M-4 -2h3 M-4 .6h2 M-4 3h2.4" stroke="#2b2b2b" stroke-width="0.9" fill="none" />
<circle cx="1.6" cy="0.6" r="2.8" fill="#fff" stroke="#2b2b2b" stroke-width="1.1"/>
<path d="M3.6 2.8l3 3.4" stroke="#2b2b2b" stroke-width="1.4" fill="none" />
</g>
<g transform="translate(839.7 83.7)">
<path d="M-6 -5h12v10h-12z" stroke="#cfcfcf" stroke-width="1" fill="#fafafa" />
<circle cx="-0.4" cy="-0.4" r="2.6" fill="none" stroke="#cfcfcf" stroke-width="1"/>
<path d="M1.6 1.6l2.6 2.6" stroke="#cfcfcf" stroke-width="1.2" fill="none" />
</g>
<text x="832.6" y="123.6" font-size="7.7" fill="#3c3c3c" textLength="8.0" lengthAdjust="spacingAndGlyphs" >Р...</text>
<rect x="845.6" y="117" width="1.1" height="1.1" fill="#777" />
<rect x="847.7" y="117" width="1.1" height="1.1" fill="#777" />
<rect x="845.6" y="118.8" width="1.1" height="1.1" fill="#777" />
<rect x="847.7" y="118.8" width="1.1" height="1.1" fill="#777" />
<rect x="845.6" y="121.2" width="1.1" height="1.1" fill="#777" />
<rect x="847.7" y="121.2" width="1.1" height="1.1" fill="#777" />
<rect x="845.6" y="123" width="1.1" height="1.1" fill="#777" />
<rect x="847.7" y="123" width="1.1" height="1.1" fill="#777" />
<rect x="849.5" y="55" width="1.4" height="72" fill="#cdcdcd" />
<g transform="translate(861 64.5)">
<path d="M-6 5.6v-5.4h4.6v-6h7.4v11.4z" stroke="#2b2b2b" stroke-width="1.1" fill="none" />
<path d="M-3.8 3.4v-1.2h4.6v-6h2.6v7.2z" stroke="#2b2b2b" stroke-width="0.9" fill="none" />
</g>
<g transform="translate(881.4 64.5)">
<path d="M-6.4 0h7.6" stroke="#2b2b2b" stroke-width="1.2" fill="none" />
<path d="M2 0h3.2" stroke="#2b2b2b" stroke-width="0.9" fill="none" stroke-dasharray="1.4 1"/>
<path d="M5.6 -7v13.6" stroke="#2b2b2b" stroke-width="0.9" fill="none" stroke-dasharray="3 1 1 1"/>
</g>
<g transform="translate(861 83.7)">
<circle cx="1.6" cy="-1.8" r="4.6" fill="#1a1a1a" stroke="#2b2b2b" stroke-width="0.5"/>
<path d="M-6 -1.4h8v7h-8z" stroke="#f1f1f1" stroke-width="0.8" fill="#1a1a1a" />
</g>
<g transform="translate(881.4 83.7)">
<path d="M-5.6 5.4v-7h3.6c-.2-5.6 8-5.6 8 0 0 2-1 3-2.4 3.6v3.4z" stroke="#2b2b2b" stroke-width="1.1" fill="none" />
</g>
<g transform="translate(861 103.5)">
<path d="M-5 -1.4l5-5.4 5 3-2.6 4.6z" stroke="#2b2b2b" stroke-width="0.6" fill="#1a1a1a" />
<path d="M-5.4 -.4l7.4 2.6" stroke="#2b2b2b" stroke-width="1" fill="none" />
<path d="M-7 1.6l3.4 2 M-3 3.6c2-1.4 4-1.4 6 0" stroke="#2b2b2b" stroke-width="0.9" fill="none" />
<path d="M-6.4 4.4h13" stroke="#2b2b2b" stroke-width="0.9" fill="none" stroke-dasharray="1.6 1"/>
<path d="M-4.4 2.4v5 M.4 2.8v4.6 M5 2.4v5" stroke="#2b2b2b" stroke-width="0.8" fill="none" stroke-dasharray="1.2 1"/>
</g>
<text x="854.5" y="123.6" font-size="7.7" fill="#3c3c3c" textLength="26.5" lengthAdjust="spacingAndGlyphs" >Инстр...</text>
<rect x="887.2" y="117" width="1.1" height="1.1" fill="#777" />
<rect x="889.3000000000001" y="117" width="1.1" height="1.1" fill="#777" />
<rect x="887.2" y="118.8" width="1.1" height="1.1" fill="#777" />
<rect x="889.3000000000001" y="118.8" width="1.1" height="1.1" fill="#777" />
<rect x="887.2" y="121.2" width="1.1" height="1.1" fill="#777" />
<rect x="889.3000000000001" y="121.2" width="1.1" height="1.1" fill="#777" />
<rect x="887.2" y="123" width="1.1" height="1.1" fill="#777" />
<rect x="889.3000000000001" y="123" width="1.1" height="1.1" fill="#777" />
<rect x="891.3" y="55" width="1.4" height="72" fill="#cdcdcd" />
<g transform="translate(902.3 64.5)">
<path d="M-5.6 -6.4h11.4v8l-3 4.4h-5.4l-3-4.4z" stroke="#2b2b2b" stroke-width="0.9" fill="#9a9a9a" />
<path d="M-2.6 -6.4h5.4v9l-2.7 3.2-2.7-3.2z" stroke="#2b2b2b" stroke-width="0.9" fill="#fff" />
<path d="M-5.6 -3l2.6-2.8M-5.6 0l3-3M-5.4 2.6l2.6-2.6M3 -3l2.6-2.8M3 0l3-3M3 3l2.6-2.6" stroke="#2b2b2b" stroke-width="0.6" fill="none" />
</g>
<path d="M910.9 72.5h-4l4 -4z" stroke="none" stroke-width="0" fill="#111" />
<g transform="translate(902.3 83.7)">
<circle cx="0" cy="0" r="5.8" fill="none" stroke="#2b2b2b" stroke-width="1.1"/>
<path d="M3.4 0a3.4 3.4 0 1 0 -3.4 3.4 M1.6 .4a1.6 1.6 0 1 0 -1.6 1.6 M-.8 1.6l1.6 .6-.8 1.2" stroke="#2b2b2b" stroke-width="0.9" fill="none" />
</g>
<g transform="translate(902.3 103.5)">
<path d="M-5.4 -1.6h8.4 M-4.4 -1.6l.8 3h5.2l.8-3 M-3 1.4l.6 2.4h2.8l.6-2.4 M-1.8 3.8l.8 2.6 .8-2.6" stroke="#2b2b2b" stroke-width="1" fill="none" />
<circle cx="3" cy="-4.4" r="2.2" fill="none" stroke="#2b2b2b" stroke-width="0.9"/>
<path d="M4.6 -2.8l2.2-1-1.6-1.6" stroke="#2b2b2b" stroke-width="0.8" fill="none" />
</g>
<text x="895" y="123.6" font-size="7.7" fill="#3c3c3c" textLength="7.0" lengthAdjust="spacingAndGlyphs" >О.</text>
<rect x="907.8" y="117" width="1.1" height="1.1" fill="#777" />
<rect x="909.9" y="117" width="1.1" height="1.1" fill="#777" />
<rect x="907.8" y="118.8" width="1.1" height="1.1" fill="#777" />
<rect x="909.9" y="118.8" width="1.1" height="1.1" fill="#777" />
<rect x="907.8" y="121.2" width="1.1" height="1.1" fill="#777" />
<rect x="909.9" y="121.2" width="1.1" height="1.1" fill="#777" />
<rect x="907.8" y="123" width="1.1" height="1.1" fill="#777" />
<rect x="909.9" y="123" width="1.1" height="1.1" fill="#777" />
<rect x="911.5" y="55" width="1.4" height="72" fill="#cdcdcd" />
<rect x="0" y="128" width="257" height="640" fill="#f1f1f1" />
<rect x="0" y="128" width="20.6" height="640" fill="#c9c9c9" />
<rect x="0" y="146.6" width="20.6" height="79" fill="#e9e9e9" />
<rect x="0" y="127.6" width="20.6" height="19.2" fill="#4b4b4b" />
<path d="M7.4 130.6v11.6 M7.4 132.6h6 M7.4 137h6 M7.4 141.6h6" stroke="#fff" stroke-width="1.3" fill="none" />
<rect x="12.6" y="131.1" width="3" height="3" fill="#fff" />
<rect x="12.6" y="135.5" width="3" height="3" fill="#fff" />
<rect x="12.6" y="140.1" width="3" height="3" fill="#fff" />
<rect x="5.9" y="129.6" width="3" height="2.6" fill="#fff" />
<path d="M5.6 151.6h10v12h-10z" stroke="#2b2b2b" stroke-width="1.1" fill="#fff" />
<path d="M7.2 154.4h2 M10.4 154.4h3.6 M7.2 157.6h2 M10.4 157.6h3.6 M7.2 160.6h2 M10.4 160.6h3.6" stroke="#2b2b2b" stroke-width="1.1" fill="none" />
<text x="5" y="182" font-size="13.5" fill="#222" textLength="4.6" lengthAdjust="spacingAndGlyphs" font-style="italic" font-family="Liberation Serif, serif" >f</text>
<text x="9.6" y="183" font-size="9" fill="#222" textLength="5.6" lengthAdjust="spacingAndGlyphs" >x</text>
<rect x="4" y="188.8" width="12.4" height="2.6" fill="#1a1a1a" rx="1"/>
<rect x="4" y="193.8" width="12.4" height="2.6" fill="#1a1a1a" rx="1"/>
<rect x="4" y="198.8" width="12.4" height="2.6" fill="#1a1a1a" rx="1"/>
<text x="2.6" y="213" font-size="6.5" fill="#222" textLength="3.6" lengthAdjust="spacingAndGlyphs" >1</text>
<text x="13" y="222" font-size="6.5" fill="#222" textLength="3.6" lengthAdjust="spacingAndGlyphs" >2</text>
<path d="M7.6 211.6h4.4v-2.4 M7.2 211.6l2-1.6v3.2z M5.2 216v3.4h5 M10.8 219.4l-2-1.6v3.2z" stroke="#2b2b2b" stroke-width="0.9" fill="none" />
<rect x="20.6" y="128" width="234.4" height="13" fill="#c6c6c6" />
<text x="23.4" y="137.3" font-size="9.8" fill="#3a3a3a" textLength="68.6" lengthAdjust="spacingAndGlyphs" stroke="#3a3a3a" stroke-width="0.15" >Дерево чертежа</text>
<circle cx="248" cy="134.4" r="3.2" fill="none" stroke="#333" stroke-width="1.8"/>
<rect x="247.1" y="129" width="1.8" height="2.2" fill="#333" transform="rotate(0 248 134.4)"/>
<rect x="247.1" y="129" width="1.8" height="2.2" fill="#333" transform="rotate(45 248 134.4)"/>
<rect x="247.1" y="129" width="1.8" height="2.2" fill="#333" transform="rotate(90 248 134.4)"/>
<rect x="247.1" y="129" width="1.8" height="2.2" fill="#333" transform="rotate(135 248 134.4)"/>
<rect x="247.1" y="129" width="1.8" height="2.2" fill="#333" transform="rotate(180 248 134.4)"/>
<rect x="247.1" y="129" width="1.8" height="2.2" fill="#333" transform="rotate(225 248 134.4)"/>
<rect x="247.1" y="129" width="1.8" height="2.2" fill="#333" transform="rotate(270 248 134.4)"/>
<rect x="247.1" y="129" width="1.8" height="2.2" fill="#333" transform="rotate(315 248 134.4)"/>
<rect x="20.6" y="141" width="234.4" height="20.4" fill="#f3f3f3" />
<path d="M26.4 147.6h10.6v7h-10.6z" stroke="#2b2b2b" stroke-width="1.1" fill="none" />
<path d="M32.4 151.6h4.6v3h-4.6z" stroke="#2b2b2b" stroke-width="0.9" fill="none" />
<path d="M45.8 145.2h11v11.4h-11z" stroke="#2b2b2b" stroke-width="1.1" fill="none" />
<path d="M49 147.6v6h5.6" stroke="#2b2b2b" stroke-width="1" fill="none" />
<path d="M49 146.8l-1.2 2.2h2.4z M55.4 153.6l-2.2-1.2v2.4z" stroke="#2b2b2b" stroke-width="0.3" fill="#2b2b2b" />
<path d="M65.4 153.2l4-4.2h8.4l-4 4.2z" stroke="#2b2b2b" stroke-width="0.5" fill="#1a1a1a" />
<path d="M90.6 144.6h7.4v7h-7.4z" stroke="#2b2b2b" stroke-width="1" fill="none" />
<circle cx="91.4" cy="152.6" r="3.8" fill="none" stroke="#2b2b2b" stroke-width="1"/>
<path d="M86 151.6l3.2-5.6 3.2 5.6z" stroke="#2b2b2b" stroke-width="0.9" fill="none" />
<path d="M106.4 144.6h12.4v12.2h-12.4z" stroke="#2b2b2b" stroke-width="1.1" fill="#fff" />
<path d="M106.8 156.4l4.2-6 2.8 3.2 1.6-1.6 3 4.4z" stroke="#2b2b2b" stroke-width="0.3" fill="#1a1a1a" />
<circle cx="115.6" cy="147.6" r="1.3" fill="#1a1a1a" stroke="#2b2b2b" stroke-width="0.5"/>
<path d="M127.4 145.6h8.6l2.6 2.6v8.6h-11.2z" stroke="#2b2b2b" stroke-width="1.1" fill="none" />
<path d="M129.4 150v4.4h7v-4.4 M129.4 153h7" stroke="#2b2b2b" stroke-width="0.8" fill="none" />
<path d="M136 143.8v2.4 M134.8 145h2.4" stroke="#2b2b2b" stroke-width="0.8" fill="none" />
<rect x="20.6" y="161.4" width="234.4" height="17.6" fill="#e4e4e4" />
<rect x="22" y="161.6" width="114.6" height="16.6" fill="#fff" stroke="#bdbdbd" stroke-width="0.8"/>
<rect x="23.6" y="163.4" width="16.4" height="12.6" fill="#000" />
<text x="29.8" y="172.6" font-size="9.6" fill="#fff" textLength="4.6" lengthAdjust="spacingAndGlyphs" >0</text>
<text x="42" y="171.8" font-size="9.8" fill="#222" textLength="73.5" lengthAdjust="spacingAndGlyphs" stroke="#222" stroke-width="0.15" >Системный вид...</text>
<path d="M124.4 167.4h7.2l-3.6 4.2z" stroke="none" stroke-width="0" fill="#222" />
<rect x="140.4" y="161.6" width="114.4" height="16.6" fill="#fff" stroke="#bdbdbd" stroke-width="0.8"/>
<rect x="142" y="163.4" width="17" height="12.6" fill="#000" />
<text x="148.4" y="172.6" font-size="9.6" fill="#fff" textLength="4.6" lengthAdjust="spacingAndGlyphs" >0</text>
<text x="160.6" y="171.8" font-size="9.8" fill="#222" textLength="73.0" lengthAdjust="spacingAndGlyphs" stroke="#222" stroke-width="0.15" >Системный слой</text>
<path d="M243 167.4h7.2l-3.6 4.2z" stroke="none" stroke-width="0" fill="#222" />
<rect x="20.6" y="179.6" width="234.4" height="19" fill="#fff" />
<rect x="20.6" y="179.6" width="20.6" height="19" fill="#ebebeb" />
<path d="M24.4 183h13.4l-5 6v6.4l-3.4-1.6v-4.8z" stroke="#2b2b2b" stroke-width="0.5" fill="#1a1a1a" />
<circle cx="52.6" cy="187.6" r="2.8" fill="none" stroke="#9a9a9a" stroke-width="1.1"/>
<line x1="50.6" y1="189.8" x2="48" y2="192.8" stroke="#9a9a9a" stroke-width="1.2" />
<line x1="20.6" y1="199.3" x2="255" y2="199.3" stroke="#5a5a5a" stroke-width="1" />
<line x1="20.6" y1="179.4" x2="255" y2="179.4" stroke="#bdbdbd" stroke-width="0.8" />
<rect x="20.6" y="199.5" width="234.4" height="21.6" fill="#e6e6e6" />
<rect x="20.6" y="221.2" width="234.4" height="20.4" fill="#e9e9e9" />
<rect x="123.4" y="199.5" width="131.6" height="42" fill="#ececec" />
<line x1="20.6" y1="221.2" x2="255" y2="221.2" stroke="#f4f4f4" stroke-width="1" />
<line x1="20.6" y1="241.8" x2="255" y2="241.8" stroke="#7a7a7a" stroke-width="1" />
<rect x="20.6" y="242.4" width="234.4" height="20" fill="#efefef" />
<rect x="123.4" y="242.4" width="131.6" height="20" fill="#f3f3f3" />
<clipPath id="cl"><rect x="20" y="199" width="234.6" height="70"/></clipPath><g clip-path="url(#cl)">
<path d="M141.6 206.4h12.4v10.4h-12.4z" stroke="#2b2b2b" stroke-width="1.1" fill="none" />
<path d="M143.4 210.4h3.6 M147.2 208.6h3.6v4.4h-3.6z M149 208.6v4.4" stroke="#2b2b2b" stroke-width="0.9" fill="none" />
<path d="M147.6 215.2h7v3.2h-7z" stroke="#2b2b2b" stroke-width="0.9" fill="#ececec" />
<text x="155.4" y="215.1" font-size="9.8" fill="#222" textLength="101.0" lengthAdjust="spacingAndGlyphs" stroke="#222" stroke-width="0.15" >ДМ427-04.00.00 ВО При</text>
<path d="M133.4 229.4v4.4l3.2-2.2z" stroke="none" stroke-width="0" fill="#333" />
<path d="M141.6 227.2h4.6l1.2 1.4h6.6v8h-12.4z" stroke="#2b2b2b" stroke-width="1" fill="#2b2b2b" />
<path d="M144 231.2h7.6v3.6h-7.6z" stroke="#eee" stroke-width="0.8" fill="#2b2b2b" />
<path d="M144.6 232.4h3" stroke="#eee" stroke-width="0.9" fill="none" />
<text x="155.4" y="234.8" font-size="9.8" fill="#222" textLength="26.4" lengthAdjust="spacingAndGlyphs" stroke="#222" stroke-width="0.15" >Листы</text>
<path d="M133.4 250.2v4.4l3.2-2.2z" stroke="none" stroke-width="0" fill="#333" />
<path d="M141.6 245.6h12v12h-12z" stroke="#2b2b2b" stroke-width="1.1" fill="#fff" />
<path d="M145 248.4v6h5.6" stroke="#2b2b2b" stroke-width="1" fill="none" />
<path d="M145 247.6l-1.2 2.2h2.4z M151.4 254.4l-2.2-1.2v2.4z" stroke="#2b2b2b" stroke-width="0.3" fill="#2b2b2b" />
<circle cx="161.4" cy="252.2" r="2.6" fill="#111" stroke="none" stroke-width="0"/>
<text x="167.8" y="255.4" font-size="9.8" fill="#1a1a1a" textLength="96.0" lengthAdjust="spacingAndGlyphs" font-weight="bold" >Системный вид (1:1)</text>
</g>
<path d="M24.8 252c3.4-5 9-5 12.4 0-3.4 5-9 5-12.4 0z" stroke="#2b2b2b" stroke-width="1.2" fill="#fff" />
<circle cx="31" cy="252" r="2" fill="#1a1a1a" stroke="#2b2b2b" stroke-width="0.8"/>
<path d="M46.6 251.2h10v6h-10z" stroke="#2b2b2b" stroke-width="0.6" fill="#1a1a1a" />
<path d="M47.6 251v-2.4c0-3 4.4-3 4.4 0" stroke="#2b2b2b" stroke-width="1.2" fill="none" />
<rect x="52.4" y="253" width="3" height="2.4" fill="#fff" />
<rect x="82" y="242.2" width="20.4" height="20.2" fill="#000" />
<text x="90" y="253" font-size="8" fill="#fff" textLength="4.0" lengthAdjust="spacingAndGlyphs" >0</text>
<circle cx="92" cy="258.4" r="1.4" fill="#fff" stroke="none" stroke-width="0"/>
<rect x="255.4" y="128" width="1.8" height="640" fill="#ffffff" />
<line x1="255" y1="141" x2="255" y2="768" stroke="#a6a6a6" stroke-width="1" />
<line x1="20.8" y1="262.6" x2="20.8" y2="768" stroke="#a0a0a0" stroke-width="0.9" />
<line x1="20.8" y1="612" x2="255" y2="612" stroke="#6e6e6e" stroke-width="1.1" />
<line x1="20.8" y1="613.2" x2="255" y2="613.2" stroke="#fafafa" stroke-width="1" />
<rect x="257.2" y="128" width="742.8" height="640" fill="#ffffff" />
<rect x="256.6" y="128" width="523.8" height="19.6" fill="#efefef" />
<path d="M256.6 128V147.6H780.4V128" stroke="#a4a4a4" stroke-width="1" fill="none" />
<rect x="258.2" y="131.4" width="1.1" height="1.1" fill="#3c3c3c" />
<rect x="258.2" y="133.3" width="1.1" height="1.1" fill="#3c3c3c" />
<rect x="259.9" y="131.4" width="1.1" height="1.1" fill="#3c3c3c" />
<rect x="259.9" y="133.3" width="1.1" height="1.1" fill="#3c3c3c" />
<rect x="261.59999999999997" y="131.4" width="1.1" height="1.1" fill="#3c3c3c" />
<rect x="261.59999999999997" y="133.3" width="1.1" height="1.1" fill="#3c3c3c" />
<rect x="263.3" y="131.4" width="1.1" height="1.1" fill="#3c3c3c" />
<rect x="263.3" y="133.3" width="1.1" height="1.1" fill="#3c3c3c" />
<rect x="268.4" y="129" width="37" height="18.2" fill="#4b4b4b" />
<path d="M282.6 133.2l-7 5.4a2.6 2.6 0 0 0 3.4 3.6l7-5.6" stroke="#fff" stroke-width="2.6" fill="none" stroke-linecap="butt"/>
<path d="M281 132.6l2.6 2.6 M284.6 135.6l2.4 2.6" stroke="#4b4b4b" stroke-width="1" fill="none" />
<path d="M293.6 135.6h7.4l-3.7 4.4z" stroke="none" stroke-width="0" fill="#fff" />
<path d="M311.6 138l6-6 M314.6 140l6-6" stroke="#2b2b2b" stroke-width="1" fill="none" />
<path d="M321 138v6 M317.6 144h7" stroke="#2b2b2b" stroke-width="1.1" fill="none" />
<path d="M333 143.6l6-6 M335.6 145l6-6" stroke="#2b2b2b" stroke-width="1" fill="none" />
<path d="M340 140v4 M336.6 144.4h7" stroke="#2b2b2b" stroke-width="1" fill="none" />
<path d="M335.4 134.4c2-3 5.6-3 7.6 0-2 3-5.6 3-7.6 0z" stroke="#2b2b2b" stroke-width="0.9" fill="#fff" />
<circle cx="339.2" cy="134.4" r="1.3" fill="#2b2b2b" stroke="#2b2b2b" stroke-width="0.6"/>
<path d="M359 140v4.6h5" stroke="#2b2b2b" stroke-width="1" fill="none" />
<path d="M359 139l-1.2 2h2.4z M364.6 144.6l-2-1.2v2.4z" stroke="#2b2b2b" stroke-width="0.3" fill="#2b2b2b" />
<path d="M357.8 134.4c2-3 5.6-3 7.6 0-2 3-5.6 3-7.6 0z" stroke="#2b2b2b" stroke-width="0.9" fill="#fff" />
<circle cx="361.6" cy="134.4" r="1.3" fill="#2b2b2b" stroke="#2b2b2b" stroke-width="0.6"/>
<line x1="371.4" y1="130" x2="371.4" y2="146.6" stroke="#c4c4c4" stroke-width="1" />
<path d="M375 135.4h13 M375 141h13 M379 131.6v12.6 M384.4 131.6v12.6" stroke="#2b2b2b" stroke-width="1.1" fill="none" />
<rect x="391" y="129.4" width="64" height="17.4" fill="#ffffff" />
<path d="M396.4 132.6v10h9" stroke="#2b2b2b" stroke-width="1.1" fill="none" />
<path d="M396.4 131l-1.5 2.8h3z M407 142.6l-2.8-1.5v3z" stroke="#2b2b2b" stroke-width="0.3" fill="#2b2b2b" />
<circle cx="396.4" cy="142.6" r="1.4" fill="#fff" stroke="#2b2b2b" stroke-width="0.9"/>
<text x="409.6" y="141.3" font-size="9.8" fill="#222" textLength="18.0" lengthAdjust="spacingAndGlyphs" >СК 0</text>
<path d="M444.6 135.6h7.4l-3.7 4.4z" stroke="none" stroke-width="0" fill="#222" />
<path d="M460.6 143.6h5v-11h6.6" stroke="#2b2b2b" stroke-width="1.2" fill="none" />
<rect x="478" y="129" width="19" height="18.2" fill="#4b4b4b" />
<path d="M482.6 133.6l9.4 8.6 M482.6 142.4l9.6-8.6" stroke="#fff" stroke-width="1" fill="none" />
<circle cx="482.2" cy="133.4" r="1.4" fill="#4b4b4b" stroke="#fff" stroke-width="0.9"/>
<circle cx="492.6" cy="133.2" r="1.4" fill="#4b4b4b" stroke="#fff" stroke-width="0.9"/>
<circle cx="482.2" cy="142.8" r="1.4" fill="#4b4b4b" stroke="#fff" stroke-width="0.9"/>
<circle cx="492.4" cy="142.6" r="1.4" fill="#4b4b4b" stroke="#fff" stroke-width="0.9"/>
<rect x="499" y="129.4" width="54.6" height="17.4" fill="#ffffff" />
<path d="M500.6 136v8 M512.6 136v8 M500.6 142.4h12" stroke="#2b2b2b" stroke-width="1" fill="none" />
<path d="M500.6 131v5 M512.6 131v5" stroke="#2b2b2b" stroke-width="0.9" fill="none" />
<path d="M500.6 130.4l-1.4 2.4h2.8z M512.6 130.4l-1.4 2.4h2.8z M500.8 142.4l2.2-1.2v2.4z M512.4 142.4l-2.2-1.2v2.4z" stroke="#2b2b2b" stroke-width="0.3" fill="#2b2b2b" />
<text x="516" y="141.3" font-size="9.8" fill="#222" textLength="4.2" lengthAdjust="spacingAndGlyphs" >1</text>
<path d="M542 135.6h7.4l-3.7 4.4z" stroke="none" stroke-width="0" fill="#222" />
<circle cx="562.6" cy="136.4" r="4" fill="none" stroke="#2b2b2b" stroke-width="1.1"/>
<path d="M565.4 139.6l4.4 4.6" stroke="#2b2b2b" stroke-width="1.6" fill="none" />
<path d="M560.4 134.6h5v4" stroke="#2b2b2b" stroke-width="0.8" fill="none" stroke-dasharray="1.2 1"/>
<path d="M567.6 132v3.2 M569.4 132.6v2" stroke="#2b2b2b" stroke-width="0.8" fill="none" stroke-dasharray="1 1"/>
<path d="M579 135.6h7.4l-3.7 4.4z" stroke="none" stroke-width="0" fill="#222" />
<rect x="592" y="129.4" width="53.6" height="17.4" fill="#ffffff" />
<circle cx="598.6" cy="135.8" r="3.8" fill="none" stroke="#2b2b2b" stroke-width="1.1"/>
<path d="M601.2 138.8l4.2 4.6" stroke="#2b2b2b" stroke-width="1.6" fill="none" />
<path d="M596.6 135.8h4 M598.6 133.8v4" stroke="#2b2b2b" stroke-width="1" fill="none" />
<text x="609.6" y="141.3" font-size="9.8" fill="#222" textLength="18.6" lengthAdjust="spacingAndGlyphs" >0.29:</text>
<path d="M634 135.6h7.4l-3.7 4.4z" stroke="none" stroke-width="0" fill="#222" />
<rect x="646" y="129.4" width="10.6" height="17.4" fill="#e2e2e2" />
<text x="649" y="141.3" font-size="9.8" fill="#333" textLength="5.4" lengthAdjust="spacingAndGlyphs" >X</text>
<rect x="656.8" y="129.4" width="34.6" height="17.4" fill="#ffffff" />
<text x="658.6" y="141.3" font-size="9.8" fill="#222" textLength="32.6" lengthAdjust="spacingAndGlyphs" >410.634(</text>
<rect x="691.6" y="129.4" width="10.4" height="17.4" fill="#e2e2e2" />
<text x="694" y="141.3" font-size="9.8" fill="#333" textLength="5.4" lengthAdjust="spacingAndGlyphs" >Y</text>
<rect x="702.2" y="129.4" width="36.4" height="17.4" fill="#ffffff" />
<text x="704" y="141.3" font-size="9.8" fill="#222" textLength="33.4" lengthAdjust="spacingAndGlyphs" >-0.0347;</text>
<g transform="translate(-2.2 0)">
<path d="M744.4 131.6h12.4 M744.4 133.4h12.4" stroke="#2b2b2b" stroke-width="1.2" fill="none" />
<path d="M752 135v9.4h4.4v-9.4z" stroke="#2b2b2b" stroke-width="0.9" fill="none" />
<path d="M752 137.4h2 M752 139.6h2 M752 141.8h2" stroke="#2b2b2b" stroke-width="0.7" fill="none" />
<path d="M744.6 139.4h5v5.4h-5z" stroke="#2b2b2b" stroke-width="0.9" fill="#555" />
<path d="M775.4 131.2a1.8 1.8 0 0 1 2.6 2.6l-2.4 2.4-2.6-2.6z" stroke="#2b2b2b" stroke-width="0.5" fill="#1a1a1a" />
<path d="M771.6 133l4.4 4.4" stroke="#2b2b2b" stroke-width="1.4" fill="none" />
<path d="M772.8 135.2l-6 6-.8 2.6 2.6-.8 6-6" stroke="#2b2b2b" stroke-width="1" fill="#fff" />
</g>
<path d="M262 201.8H992.6V716.4H262z" stroke="#6e6e6e" stroke-width="1.1" fill="#ffffff" />
<path d="M992.6 201.8V716.4H262" stroke="#2a2a2a" stroke-width="1.5" fill="none" />
<path d="M317.4 220.6H958.8V651H317.4z" stroke="#c9c9c9" stroke-width="1" fill="none" />
<path d="M279.5 206.1H988.4V712.1H279.5z" stroke="#1c8cff" stroke-width="2.12" fill="none" stroke-linejoin="round" />
<path d="M279.5 206.1H340.6V218.2H279.5z" stroke="#1c8cff" stroke-width="1.89" fill="none" stroke-linejoin="round" />
<text x="339" y="208.6" font-size="7.4" fill="#1a1a1a" textLength="55.0" lengthAdjust="spacingAndGlyphs" font-style="italic" transform="rotate(180 339 208.6)">ДМ427-04.00.00 ВО</text>
<path d="M269.6 464H279.5V516H269.6z" stroke="#1c8cff" stroke-width="1.65" fill="none" stroke-linejoin="round" />
<path d="M269.6 516H279.5V568H269.6z" stroke="#1c8cff" stroke-width="1.65" fill="none" stroke-linejoin="round" />
<path d="M269.6 586H279.5V616.4H269.6z" stroke="#1c8cff" stroke-width="1.65" fill="none" stroke-linejoin="round" />
<path d="M269.6 616.4H279.5V638.2H269.6z" stroke="#1c8cff" stroke-width="1.65" fill="none" stroke-linejoin="round" />
<path d="M269.6 638.2H279.5V660H269.6z" stroke="#1c8cff" stroke-width="1.65" fill="none" stroke-linejoin="round" />
<path d="M269.6 660H279.5V690.4H269.6z" stroke="#1c8cff" stroke-width="1.65" fill="none" stroke-linejoin="round" />
<path d="M269.6 690.4H279.5V712.1H269.6z" stroke="#1c8cff" stroke-width="1.65" fill="none" stroke-linejoin="round" />
<path d="M273.8 464V568 M273.8 586V712" stroke="#1c8cff" stroke-width="1.3" fill="none" stroke-linejoin="round" />
<text x="273" y="505.0" font-size="3.9" fill="#111" textLength="30.0" lengthAdjust="spacingAndGlyphs" font-weight="bold" font-style="italic" transform="rotate(-90 272.9 505.0)">Перв. примен.</text>
<text x="273" y="553.0" font-size="3.9" fill="#111" textLength="22.0" lengthAdjust="spacingAndGlyphs" font-weight="bold" font-style="italic" transform="rotate(-90 272.9 553.0)">Справ. №</text>
<text x="273" y="612.0" font-size="3.9" fill="#111" textLength="22.0" lengthAdjust="spacingAndGlyphs" font-weight="bold" font-style="italic" transform="rotate(-90 272.9 612.0)">Подп. и дата</text>
<text x="273" y="636.3" font-size="3.9" fill="#111" textLength="18.0" lengthAdjust="spacingAndGlyphs" font-weight="bold" font-style="italic" transform="rotate(-90 272.9 636.3)">Взам. инв. №</text>
<text x="273" y="658.0" font-size="3.9" fill="#111" textLength="18.0" lengthAdjust="spacingAndGlyphs" font-weight="bold" font-style="italic" transform="rotate(-90 272.9 658.0)">Инв. № дубл.</text>
<text x="273" y="686.0" font-size="3.9" fill="#111" textLength="22.0" lengthAdjust="spacingAndGlyphs" font-weight="bold" font-style="italic" transform="rotate(-90 272.9 686.0)">Подп. и дата</text>
<text x="273" y="710.2" font-size="3.9" fill="#111" textLength="18.0" lengthAdjust="spacingAndGlyphs" font-weight="bold" font-style="italic" transform="rotate(-90 272.9 710.2)">Инв. № подл.</text>
<path d="M262 698V686 M260.4 690.4l1.6-4 1.6 4z M259.6 697.6l5-1.4-5-2.6z" stroke="#1e1e1e" stroke-width="1.0" fill="none" />
<text x="262.6" y="684.4" font-size="6.4" fill="#222" textLength="4.4" lengthAdjust="spacingAndGlyphs" font-style="italic" >Y</text>
<path d="M284.6 716.6h8 M289 715l4 1.6-4 1.6z M285 714l1.4 5 2.6-5z" stroke="#1e1e1e" stroke-width="1.0" fill="none" />
<text x="292.6" y="715" font-size="6.4" fill="#222" textLength="4.6" lengthAdjust="spacingAndGlyphs" font-style="italic" >X</text>
<path d="M827.6 664.6H988.4V712.1H827.6z" stroke="#1c8cff" stroke-width="2.01" fill="none" stroke-linejoin="round" />
<path d="M884.1 664.6V712.1 M944.9 677.6V712.1" stroke="#1c8cff" stroke-width="1.89" fill="none" stroke-linejoin="round" />
<path d="M833.7 664.6V686.2 M842.4 664.6V712.1 M862.3 664.6V712.1 M875.4 664.6V712.1" stroke="#1c8cff" stroke-width="1.77" fill="none" stroke-linejoin="round" />
<path d="M827.6 668.9H884.1" stroke="#1c8cff" stroke-width="1.42" fill="none" stroke-linejoin="round" />
<path d="M827.6 673.2H884.1" stroke="#1c8cff" stroke-width="1.42" fill="none" stroke-linejoin="round" />
<path d="M827.6 677.6H884.1" stroke="#1c8cff" stroke-width="1.42" fill="none" stroke-linejoin="round" />
<path d="M827.6 681.9H884.1" stroke="#1c8cff" stroke-width="1.77" fill="none" stroke-linejoin="round" />
<path d="M827.6 686.2H884.1" stroke="#1c8cff" stroke-width="1.77" fill="none" stroke-linejoin="round" />
<path d="M827.6 690.5H884.1" stroke="#1c8cff" stroke-width="1.42" fill="none" stroke-linejoin="round" />
<path d="M827.6 694.8H884.1" stroke="#1c8cff" stroke-width="1.42" fill="none" stroke-linejoin="round" />
<path d="M827.6 699.1H884.1" stroke="#1c8cff" stroke-width="1.42" fill="none" stroke-linejoin="round" />
<path d="M827.6 703.5H884.1" stroke="#1c8cff" stroke-width="1.42" fill="none" stroke-linejoin="round" />
<path d="M827.6 707.8H884.1" stroke="#1c8cff" stroke-width="1.42" fill="none" stroke-linejoin="round" />
<path d="M884.1 677.6H988.4 M884.1 699.1H988.4 M944.9 681.9H988.4 M944.9 694.8H988.4" stroke="#1c8cff" stroke-width="1.89" fill="none" stroke-linejoin="round" />
<path d="M957.9 677.6V694.8 M972.7 677.6V694.8 M962.2 694.8V699.1" stroke="#1c8cff" stroke-width="1.77" fill="none" stroke-linejoin="round" />
<path d="M949.2 681.9V694.8 M953.5 681.9V694.8" stroke="#1e1e1e" stroke-width="1.12" fill="none" />
<text x="904.6" y="675.4" font-size="9.4" fill="#3a3a3a" textLength="60.4" lengthAdjust="spacingAndGlyphs" font-style="italic" >ДМ427-04.00.00 ВО</text>
<text x="885.2" y="686.6" font-size="7.6" fill="#3a3a3a" textLength="57.4" lengthAdjust="spacingAndGlyphs" font-style="italic" >Привод ленточного</text>
<text x="891.8" y="696.4" font-size="7.6" fill="#3a3a3a" textLength="43.4" lengthAdjust="spacingAndGlyphs" font-style="italic" >транспортера</text>
<text x="946.2" y="681.2" font-size="3.6" fill="#111" textLength="7.0" lengthAdjust="spacingAndGlyphs" font-weight="bold" font-style="italic" >Лит.</text>
<text x="959.6" y="681.2" font-size="3.6" fill="#111" textLength="10.0" lengthAdjust="spacingAndGlyphs" font-weight="bold" font-style="italic" >Масса</text>
<text x="973.2" y="681.2" font-size="3.6" fill="#111" textLength="14.4" lengthAdjust="spacingAndGlyphs" font-weight="bold" font-style="italic" >Масштаб</text>
<text x="977.9" y="691.4" font-size="6" fill="#3a3a3a" textLength="6.0" lengthAdjust="spacingAndGlyphs" font-style="italic" >1:4</text>
<text x="946.2" y="698.4" font-size="3.6" fill="#111" textLength="8.0" lengthAdjust="spacingAndGlyphs" font-weight="bold" font-style="italic" >Лист</text>
<text x="964.0" y="698.4" font-size="3.6" fill="#111" textLength="12.0" lengthAdjust="spacingAndGlyphs" font-weight="bold" font-style="italic" >Листов</text>
<text x="983.9" y="698.4" font-size="3.6" fill="#111" textLength="1.6" lengthAdjust="spacingAndGlyphs" font-weight="bold" font-style="italic" >1</text>
<text x="950.1" y="702.9" font-size="3.8" fill="#111" textLength="36.0" lengthAdjust="spacingAndGlyphs" font-weight="bold" font-style="italic" >МГТУ им. Н.Э. Баумана</text>
<text x="947.0" y="706.7" font-size="3.8" fill="#111" textLength="40.0" lengthAdjust="spacingAndGlyphs" font-weight="bold" font-style="italic" >кафедра Детали машин</text>
<text x="953.5" y="710.5" font-size="3.8" fill="#111" textLength="28.0" lengthAdjust="spacingAndGlyphs" font-weight="bold" font-style="italic" >группа РК-3-61</text>
<text x="828.1" y="685.6" font-size="3.3" fill="#111" textLength="13.6" lengthAdjust="spacingAndGlyphs" font-weight="bold" font-style="italic" >Изм. Лист</text>
<text x="845.8" y="685.6" font-size="3.3" fill="#111" textLength="14.0" lengthAdjust="spacingAndGlyphs" font-weight="bold" font-style="italic" >№ докум.</text>
<text x="863.6" y="685.6" font-size="3.3" fill="#111" textLength="9.0" lengthAdjust="spacingAndGlyphs" font-weight="bold" font-style="italic" >Подп.</text>
<text x="876.2" y="685.6" font-size="3.3" fill="#111" textLength="7.0" lengthAdjust="spacingAndGlyphs" font-weight="bold" font-style="italic" >Дата</text>
<text x="828.3" y="689.9" font-size="3.6" fill="#111" textLength="13.0" lengthAdjust="spacingAndGlyphs" font-weight="bold" font-style="italic" >Разраб.</text>
<text x="842.9" y="689.9" font-size="3.6" fill="#111" textLength="19.0" lengthAdjust="spacingAndGlyphs" font-weight="bold" font-style="italic" >Стрельцов А.А.</text>
<text x="828.3" y="694.2" font-size="3.6" fill="#111" textLength="9.0" lengthAdjust="spacingAndGlyphs" font-weight="bold" font-style="italic" >Пров.</text>
<text x="842.9" y="694.2" font-size="3.6" fill="#111" textLength="19.0" lengthAdjust="spacingAndGlyphs" font-weight="bold" font-style="italic" >Иванов И.И.</text>
<text x="828.3" y="698.5" font-size="3.6" fill="#111" textLength="13.0" lengthAdjust="spacingAndGlyphs" font-weight="bold" font-style="italic" >Т.контр.</text>
<text x="828.3" y="707.2" font-size="3.6" fill="#111" textLength="13.0" lengthAdjust="spacingAndGlyphs" font-weight="bold" font-style="italic" >Н.контр.</text>
<text x="828.3" y="711.5" font-size="3.6" fill="#111" textLength="7.0" lengthAdjust="spacingAndGlyphs" font-weight="bold" font-style="italic" >Утв.</text>
<text x="893.4" y="715.6" font-size="3.4" fill="#111" textLength="15.0" lengthAdjust="spacingAndGlyphs" font-weight="bold" font-style="italic" >Копировал</text>
<text x="955" y="715.6" font-size="3.4" fill="#111" textLength="10.0" lengthAdjust="spacingAndGlyphs" font-weight="bold" font-style="italic" >Формат</text>
<text x="970" y="715.6" font-size="3.4" fill="#111" textLength="4.0" lengthAdjust="spacingAndGlyphs" font-weight="bold" font-style="italic" >А1</text>
<path d="M461.4 232.4H498V269.8H461.4z" stroke="#1c8cff" stroke-width="1.77" fill="#fff" stroke-linejoin="round" />
<path d="M452 229.6L441.8 237.6V264.6L452 272.4H461.4V229.6z" stroke="#1c8cff" stroke-width="1.77" fill="#fff" stroke-linejoin="round" />
<path d="M452 229.6V272.4" stroke="#1c8cff" stroke-width="1.53" fill="none" stroke-linejoin="round" />
<path d="M481.2 223.1H497.6V234.3H481.2z" stroke="#1c8cff" stroke-width="1.77" fill="#fff" stroke-linejoin="round" />
<path d="M489 227l2 2.100-2 2.100-2-2.100z" stroke="#1c8cff" stroke-width="1" fill="none" />
<path d="M498 232.6c3.400 6 3.400 31 0 37" stroke="#1c8cff" stroke-width="1.77" fill="none" stroke-linejoin="round" />
<path d="M499.600 236c2 6 2 24 0 30" stroke="#1c8cff" stroke-width="1.3" fill="none" stroke-linejoin="round" />
<path d="M501 247.6H505.2V257.2H501z" stroke="#1c8cff" stroke-width="1.65" fill="#fff" stroke-linejoin="round" />
<path d="M505.2 249.6h2.400v6h-2.400" stroke="#1c8cff" stroke-width="1.42" fill="none" stroke-linejoin="round" />
<path d="M462.6 270H496V274.6H462.6z" stroke="#1c8cff" stroke-width="1.53" fill="#fff" stroke-linejoin="round" />
<path d="M469.8 266.8H488V270.4H469.8z" stroke="#1c8cff" stroke-width="1.42" fill="#fff" stroke-linejoin="round" />
<path d="M467 274.6H490.8V283H467z" stroke="#1c8cff" stroke-width="1.53" fill="#fff" stroke-linejoin="round" />
<path d="M472 274.6V283 M486 274.6V283 M476.4 276.4h5.4v6h-5.4z" stroke="#1c8cff" stroke-width="1.3" fill="none" stroke-linejoin="round" />
<path d="M409.4 300V286l3.4-3.6H496.4l3.2 3.6V300" stroke="#1c8cff" stroke-width="1.77" fill="#fff" stroke-linejoin="round" />
<path d="M410.6 296L423.6 283" stroke="#1c8cff" stroke-width="1.42" fill="none" stroke-linejoin="round" />
<path d="M405.6 308.6H421.4V302.4H499.6V347.6H405.6z" stroke="#1c8cff" stroke-width="1.77" fill="#fff" stroke-linejoin="round" />
<path d="M405.6 308.6V347.6 M409.4 300V308.6" stroke="#1c8cff" stroke-width="1.65" fill="none" stroke-linejoin="round" />
<path d="M402.4 350.4c-1.6-1.6-1.4-3.4.6-4.6h3.4V334.4h7.2v12.6" stroke="#1c8cff" stroke-width="1.77" fill="none" stroke-linejoin="round" />
<path d="M402.4 350.2H500" stroke="#1c8cff" stroke-width="2.01" fill="none" stroke-linejoin="round" />
<path d="M492.2 334.4H499.6V350.2H492.2z" stroke="#1c8cff" stroke-width="1.65" fill="none" stroke-linejoin="round" />
<path d="M405.6 347.4h8.4 M492.2 347.4h-7.2" stroke="#1c8cff" stroke-width="1.42" fill="none" stroke-linejoin="round" />
<path d="M500.4 299.2H506V325.6H500.4z" stroke="#1c8cff" stroke-width="1.77" fill="#fff" stroke-linejoin="round" />
<path d="M497 303.6h3.4 M497 322h3.4 M503 299.2V325.6" stroke="#1c8cff" stroke-width="1.3" fill="none" stroke-linejoin="round" />
<path d="M429.4 281.4v-6.4c0-2.4 3.4-2.4 3.4 0v6.4" stroke="#1c8cff" stroke-width="1.65" fill="none" stroke-linejoin="round" />
<path d="M431 276v4" stroke="#ff8a1a" stroke-width="1.03" fill="none" />
<path d="M469 286.6H477.6V297.6H469z" stroke="#1c8cff" stroke-width="1.42" fill="none" stroke-linejoin="round" />
<path d="M481.4 286.6H490V297.6H481.4z" stroke="#1c8cff" stroke-width="1.42" fill="none" stroke-linejoin="round" />
<path d="M477.6 283V298 M481.4 283V298 M468 292h23" stroke="#1c8cff" stroke-width="1.3" fill="none" stroke-linejoin="round" />
<path d="M473.2 284.6v14 M485.6 284.6v14 M466 291.4h26" stroke="#ff8a1a" stroke-width="1.03" fill="none" />
<path d="M411.79999999999995 287.4l2.6-2.8 2.6 2.8-2.6 2.8z M410.79999999999995 287.4h7.2 M414.4 283.59999999999997v7.6" stroke="#ff8a1a" stroke-width="0.92" fill="none" />
<path d="M492.0 287.4l2.6-2.8 2.6 2.8-2.6 2.8z M491.0 287.4h7.2 M494.6 283.59999999999997v7.6" stroke="#ff8a1a" stroke-width="0.92" fill="none" />
<path d="M440.6 280.4v4 M412 345v5 M498 345v5 M421.4 347v3" stroke="#ff8a1a" stroke-width="1.03" fill="none" />
<circle cx="439.4" cy="312.9" r="12.9" fill="#fff" stroke="#1c8cff" stroke-width="1.5"/>
<circle cx="439.4" cy="312.9" r="10.5" fill="none" stroke="#ff8a1a" stroke-width="0.9"/>
<path d="M439.4 298.0V327.79999999999995" stroke="#ff8a1a" stroke-width="1.03" fill="none" />
<path d="M444.5 307.8L447.4 304.9" stroke="#ff8a1a" stroke-width="0.92" fill="none" />
<path d="M434.3 307.8L431.4 304.9" stroke="#ff8a1a" stroke-width="0.92" fill="none" />
<path d="M444.5 318.0L447.4 320.9" stroke="#ff8a1a" stroke-width="0.92" fill="none" />
<path d="M434.3 318.0L431.4 320.9" stroke="#ff8a1a" stroke-width="0.92" fill="none" />
<circle cx="439.4" cy="312.9" r="1.1" fill="#ff5a1a" stroke="#ff5a1a" stroke-width="0.6"/>
<circle cx="472" cy="312.9" r="12.1" fill="#fff" stroke="#1c8cff" stroke-width="1.5"/>
<circle cx="472" cy="312.9" r="9.7" fill="none" stroke="#ff8a1a" stroke-width="0.9"/>
<path d="M472 298.79999999999995V327.0" stroke="#ff8a1a" stroke-width="1.03" fill="none" />
<path d="M477.1 307.8L480.0 304.9" stroke="#ff8a1a" stroke-width="0.92" fill="none" />
<path d="M466.9 307.8L464.0 304.9" stroke="#ff8a1a" stroke-width="0.92" fill="none" />
<path d="M477.1 318.0L480.0 320.9" stroke="#ff8a1a" stroke-width="0.92" fill="none" />
<path d="M466.9 318.0L464.0 320.9" stroke="#ff8a1a" stroke-width="0.92" fill="none" />
<circle cx="472" cy="312.9" r="1.1" fill="#ff5a1a" stroke="#ff5a1a" stroke-width="0.6"/>
<path d="M456 303V323 M427 303v6" stroke="#ff8a1a" stroke-width="1.03" fill="none" />
<path d="M507.8 247.6c0-5.6 8.6-5.6 8.6 0V331.6c0 6-8.600 6-8.600 0z" stroke="#1c8cff" stroke-width="1.77" fill="#9cc9ff" stroke-linejoin="round" />
<rect x="509.2" y="262" width="1.8" height="30" fill="#ffffff" />
<path d="M511.4 245V334 M513.4 244V335.6 M515 245V334" stroke="#1c8cff" stroke-width="1.53" fill="none" stroke-linejoin="round" />
<path d="M508 262.6h-1.6v28h1.6" stroke="#1c8cff" stroke-width="1.18" fill="none" stroke-linejoin="round" />
<path d="M516.2 309h3l3 4-3 4h-3" stroke="#1c8cff" stroke-width="1.65" fill="#fff" stroke-linejoin="round" />
<circle cx="507.8" cy="249.6" r="1.3" fill="#222" stroke="#222" stroke-width="0.8"/>
<path d="M441 252.5H517.4" stroke="#ff8a1a" stroke-width="1.03" fill="none" />
<path d="M405 312.9H524.6" stroke="#ff8a1a" stroke-width="1.03" fill="none" />
<path d="M506 305v15" stroke="#ff8a1a" stroke-width="1.03" fill="none" />
<path d="M498 223H543.4 M500.4 350.2H543.4 M520 252.4H531 M518 312.6H531" stroke="#1e1e1e" stroke-width="1.0" fill="none" />
<path d="M527.8 252.4V350.2 M541.8 223V350.2" stroke="#1e1e1e" stroke-width="1.0" fill="none" />
<path d="M527.8 252.4l-.9 3h1.8z M527.8 312.4l-.9-3h1.8z M527.8 312.8l-.9 3h1.8z M527.8 350.2l-.9-3h1.8z M541.8 223l-.9 3h1.8z M541.8 350.2l-.9-3h1.8z" stroke="#1e1e1e" stroke-width="0.5" fill="#1e1e1e" />
<text x="525.6" y="282" font-size="5.2" fill="#2a2a2a" textLength="8.2" lengthAdjust="spacingAndGlyphs" font-style="italic" text-anchor="middle" transform="rotate(-90 525.6 282)">262</text>
<text x="525.6" y="331" font-size="5.2" fill="#2a2a2a" textLength="5.5" lengthAdjust="spacingAndGlyphs" font-style="italic" text-anchor="middle" transform="rotate(-90 525.6 331)">75</text>
<text x="539.6" y="290" font-size="5.2" fill="#2a2a2a" textLength="8.2" lengthAdjust="spacingAndGlyphs" font-style="italic" text-anchor="middle" transform="rotate(-90 539.6 290)">548</text>
<path d="M326.4 313H409.6 M326.4 313V441.6" stroke="#1e1e1e" stroke-width="1.0" fill="none" />
<path d="M326.4 313l-.9 3h1.8z M326.4 441.6l-.9-3h1.8z" stroke="#1e1e1e" stroke-width="0.5" fill="#1e1e1e" />
<path d="M321.6 442.6h9" stroke="#1c8cff" stroke-width="1.1" fill="none" />
<path d="M322.6 446.6l2.6-3.6 M325.4 447.4l3-4.4 M328.4 447l2.600-4" stroke="#1e1e1e" stroke-width="1.0" fill="none" />
<text x="324.2" y="378" font-size="5.2" fill="#2a2a2a" textLength="8.2" lengthAdjust="spacingAndGlyphs" font-style="italic" text-anchor="middle" transform="rotate(-90 324.2 378)">625</text>
<path d="M624 282.8H722.4V343.8H624z" stroke="#1c8cff" stroke-width="1.89" fill="#fff" stroke-linejoin="round" />
<path d="M614.5 306.2H624.3V318.8H614.5z" stroke="#1c8cff" stroke-width="1.65" fill="#fff" stroke-linejoin="round" />
<path d="M608.6 303.6H614.6V322.4H608.6z" stroke="#1c8cff" stroke-width="1.65" fill="#fff" stroke-linejoin="round" />
<path d="M608 300.6h-5.400v23.400h5.400" stroke="#1c8cff" stroke-width="1.77" fill="none" stroke-linejoin="round" />
<path d="M602 301V324" stroke="#1c8cff" stroke-width="2.6" fill="none" stroke-linejoin="round" />
<path d="M603.4 322.4H610.4V326.2H603.4z" stroke="#1c8cff" stroke-width="1.3" fill="none" stroke-linejoin="round" />
<path d="M600 304.6h6 M600 320.6h6 M606.6 322v5" stroke="#ff8a1a" stroke-width="1.03" fill="none" />
<path d="M722.4 306.4H731.4V318.8H722.4z" stroke="#1c8cff" stroke-width="1.65" fill="#fff" stroke-linejoin="round" />
<path d="M731.4 303H737.6V322.4H731.4z" stroke="#1c8cff" stroke-width="1.65" fill="#fff" stroke-linejoin="round" />
<path d="M737.4 300.4H742V325.2H737.4z" stroke="#1c8cff" stroke-width="1.77" fill="#fff" stroke-linejoin="round" />
<path d="M742 304.6H746.6V320.6H742z" stroke="#1c8cff" stroke-width="1.53" fill="#fff" stroke-linejoin="round" />
<path d="M738 303h5 M738 322.6h5 M739.8 299v5 M739.8 321.4v5" stroke="#ff8a1a" stroke-width="1.03" fill="none" />
<path d="M746.6 306.6H753.6V318.6H746.6z" stroke="#1c8cff" stroke-width="1.53" fill="#fff" stroke-linejoin="round" />
<path d="M753.4 298.4H760.8V327.6H753.4z" stroke="#1c8cff" stroke-width="1.77" fill="#fff" stroke-linejoin="round" />
<path d="M763.4 298.4H770.6V327.6H763.4z" stroke="#1c8cff" stroke-width="1.77" fill="#fff" stroke-linejoin="round" />
<path d="M755.6 298.4V327.6 M768.4 298.4V327.6" stroke="#1c8cff" stroke-width="1.3" fill="none" stroke-linejoin="round" />
<path d="M762 296.6V329.4" stroke="#1e1e1e" stroke-width="1.25" fill="none" />
<path d="M770.6 305.4H778.4V319.8H770.6z" stroke="#1c8cff" stroke-width="1.53" fill="#fff" stroke-linejoin="round" />
<path d="M761 296v4 M761 326v4" stroke="#ff8a1a" stroke-width="1.03" fill="none" />
<path d="M778.6 298.8H783.4V326H778.6z" stroke="#1c8cff" stroke-width="1.77" fill="#fff" stroke-linejoin="round" />
<path d="M826.6 298.8H830.6V326H826.6z" stroke="#1c8cff" stroke-width="1.65" fill="#fff" stroke-linejoin="round" />
<path d="M782.8 307.6H828.8V350H782.8z" stroke="#1c8cff" stroke-width="1.77" fill="#fff" stroke-linejoin="round" />
<path d="M787.6 307.6V285c0-2 1-3 3-3H821c2 0 3 1 3 3V307.6" stroke="#1c8cff" stroke-width="1.77" fill="#fff" stroke-linejoin="round" />
<path d="M785 290c-1.400 3-1.400 9 0 13 M826.400 290c1.400 3 1.400 9 0 13" stroke="#1c8cff" stroke-width="1.3" fill="none" stroke-linejoin="round" />
<path d="M803.4 282V307.6 M807.2 282V307.6" stroke="#1c8cff" stroke-width="1.65" fill="none" stroke-linejoin="round" />
<path d="M782.8 312.8H828.8 M786 307.6V334 M825.600 307.6V334" stroke="#1c8cff" stroke-width="1.42" fill="none" stroke-linejoin="round" />
<path d="M784 333.8H791V347.6H784z" stroke="#1c8cff" stroke-width="1.53" fill="none" stroke-linejoin="round" />
<path d="M819.2 333.8H826V347.6H819.2z" stroke="#1c8cff" stroke-width="1.53" fill="none" stroke-linejoin="round" />
<path d="M782.8 347.4H828.8" stroke="#1c8cff" stroke-width="1.3" fill="none" stroke-linejoin="round" />
<path d="M785 334.4h5 M820.4 334.400h5" stroke="#1e1e1e" stroke-width="1.12" fill="none" />
<path d="M786.4 344.6v6 M789.2 344.6v6 M821.600 344.6v6 M824.400 344.6v6 M792.4 306v12 M785.400 314.400h5 M786 308v9 M795 282.400v3 M815.600 282.400v3 M803 287.400h4.400" stroke="#ff8a1a" stroke-width="1.03" fill="none" />
<circle cx="805.3" cy="346.6" r="2.8" fill="#fff" stroke="#1c8cff" stroke-width="1.3"/>
<path d="M802 346.6h6.600" stroke="#ff8a1a" stroke-width="0.92" fill="none" />
<path d="M797.6 222.6H812.8V230.6H797.6z" stroke="#1c8cff" stroke-width="1.65" fill="#fff" stroke-linejoin="round" />
<path d="M797.6 226.400h-4.600c-2 0-2 3.400 0 3.400h4.600" stroke="#1c8cff" stroke-width="1.42" fill="#fff" stroke-linejoin="round" />
<circle cx="805.3" cy="252.2" r="23.2" fill="#fff" stroke="#1c8cff" stroke-width="1.6"/>
<circle cx="805.3" cy="252.2" r="4.9" fill="#fff" stroke="#1c8cff" stroke-width="1.4"/>
<path d="M787 269.4H793.4V272.6H787z" stroke="#1c8cff" stroke-width="1.18" fill="#fff" stroke-linejoin="round" />
<path d="M817.6 269.4H824V272.6H817.6z" stroke="#1c8cff" stroke-width="1.18" fill="#fff" stroke-linejoin="round" />
<path d="M786.8 273.4H834.4" stroke="#1c8cff" stroke-width="3.07" fill="none" stroke-linejoin="round" />
<path d="M778.4 281c-2-1.600-1.600-4.400 1-5.600l8.400-3 M779.600 282.400l14-5.600 40-3.400 M778.400 281l6 9.600 2.600-7" stroke="#1c8cff" stroke-width="1.53" fill="none" stroke-linejoin="round" />
<path d="M793.400 277.600H826" stroke="#1c8cff" stroke-width="1.3" fill="none" stroke-linejoin="round" />
<circle cx="781.3" cy="278.6" r="1.9" fill="#fff" stroke="#1c8cff" stroke-width="1"/>
<path d="M779 278.6h4.600 M781.3 276.400v4.400" stroke="#ff8a1a" stroke-width="0.8" fill="none" />
<path d="M830.4 256.400c0-2 2.400-2 2.400 0V285c0 2-2.400 2-2.400 0z" stroke="#1c8cff" stroke-width="1.3" fill="#fff" stroke-linejoin="round" />
<path d="M831.6 257V285" stroke="#1e1e1e" stroke-width="1.38" fill="none" />
<circle cx="832.4" cy="290.2" r="2.6" fill="#fff" stroke="#1c8cff" stroke-width="1.1"/>
<path d="M829.4 290.2h6 M832.4 287.200v6" stroke="#ff8a1a" stroke-width="0.8" fill="none" />
<path d="M824 282l6.400 6.400" stroke="#1c8cff" stroke-width="1.3" fill="none" stroke-linejoin="round" />
<path d="M789.600 270v4 M821 270v4" stroke="#ff8a1a" stroke-width="1.03" fill="none" />
<path d="M597.6 312.6H791 M805.3 222V352 M781 252.2H829.6" stroke="#ff8a1a" stroke-width="1.03" fill="none" />
<path d="M711.4 281.4v3" stroke="#ff8a1a" stroke-width="1.03" fill="none" />
<path d="M654.6 283V343.6" stroke="#1e1e1e" stroke-width="1.0" fill="none" />
<path d="M654.6 283l-1 3.4h2z M654.6 343.6l-1-3.4h2z" stroke="#1e1e1e" stroke-width="0.5" fill="#1e1e1e" />
<text x="652.4" y="313" font-size="5" fill="#2a2a2a" textLength="11.5" lengthAdjust="spacingAndGlyphs" font-style="italic" text-anchor="middle" transform="rotate(-90 652.4 313)">⌀400</text>
<path d="M590 312.6H603 M590 326.4H604 M592.2 312.6V326.4" stroke="#1e1e1e" stroke-width="1.0" fill="none" />
<path d="M592.2 312.6l-.9 2.8h1.8z M592.2 326.4l-.9-2.8h1.8z" stroke="#1e1e1e" stroke-width="0.5" fill="#1e1e1e" />
<text x="589.6" y="320" font-size="5" fill="#2a2a2a" textLength="5.3" lengthAdjust="spacingAndGlyphs" font-style="italic" text-anchor="middle" transform="rotate(-90 589.6 320)">63</text>
<path d="M409 418H470V516.5H409z" stroke="#1c8cff" stroke-width="1.89" fill="#fff" stroke-linejoin="round" />
<path d="M433 410H446V418H433z" stroke="#1c8cff" stroke-width="1.65" fill="#fff" stroke-linejoin="round" />
<path d="M429.6 405.6H450.4V410.2H429.6z" stroke="#1c8cff" stroke-width="1.65" fill="#fff" stroke-linejoin="round" />
<path d="M431.4 402.6H448.6V405.8H431.4z" stroke="#1c8cff" stroke-width="1.42" fill="#fff" stroke-linejoin="round" />
<path d="M427 398.6c1-3 3-4.4 5-4.4h15c2 0 4 1.4 5 4.4" stroke="#1c8cff" stroke-width="1.65" fill="#fff" stroke-linejoin="round" />
<path d="M419.8 398.6H427.4V404.6H419.8z" stroke="#1c8cff" stroke-width="1.77" fill="#fff" stroke-linejoin="round" />
<path d="M452 398.6H459.6V404.6H452z" stroke="#1c8cff" stroke-width="1.77" fill="#fff" stroke-linejoin="round" />
<path d="M427.4 401.6c2 2.6 4 3 6 3h12c2 0 4-.4 6-3" stroke="#1c8cff" stroke-width="1.42" fill="none" stroke-linejoin="round" />
<circle cx="423.6" cy="401.6" r="1.7" fill="none" stroke="#666" stroke-width="0.8"/>
<path d="M420.6 401.6h6 M423.6 398.6v6" stroke="#ff8a1a" stroke-width="0.8" fill="none" />
<circle cx="455.8" cy="401.6" r="1.7" fill="none" stroke="#666" stroke-width="0.8"/>
<path d="M452.8 401.6h6 M455.8 398.6v6" stroke="#ff8a1a" stroke-width="0.8" fill="none" />
<path d="M432.4 395v5 M447 395v5" stroke="#ff8a1a" stroke-width="1.03" fill="none" />
<path d="M433 516.5H446V526H433z" stroke="#1c8cff" stroke-width="1.65" fill="#fff" stroke-linejoin="round" />
<path d="M429.6 525.6H450.4V530.6H429.6z" stroke="#1c8cff" stroke-width="1.65" fill="#fff" stroke-linejoin="round" />
<path d="M419.8 531H427.4V537.6H419.8z" stroke="#1c8cff" stroke-width="1.77" fill="#fff" stroke-linejoin="round" />
<path d="M452 531H459.6V537.6H452z" stroke="#1c8cff" stroke-width="1.77" fill="#fff" stroke-linejoin="round" />
<path d="M427.4 533.6c2-2.6 4-3 6-3h12c2 0 4 .4 6 3" stroke="#1c8cff" stroke-width="1.42" fill="none" stroke-linejoin="round" />
<path d="M427 537.6c1 3 3 4.4 5 4.4h15c2 0 4-1.4 5-4.4" stroke="#1c8cff" stroke-width="1.65" fill="none" stroke-linejoin="round" />
<circle cx="423.6" cy="534.4" r="1.7" fill="none" stroke="#666" stroke-width="0.8"/>
<path d="M420.6 534.4h6 M423.6 531.4v6" stroke="#ff8a1a" stroke-width="0.8" fill="none" />
<circle cx="455.8" cy="534.4" r="1.7" fill="none" stroke="#666" stroke-width="0.8"/>
<path d="M452.8 534.4h6 M455.8 531.4v6" stroke="#ff8a1a" stroke-width="0.8" fill="none" />
<path d="M432.4 535v5 M447 535v5" stroke="#ff8a1a" stroke-width="1.03" fill="none" />
<path d="M433 542H446V548.4H433z" stroke="#1c8cff" stroke-width="1.53" fill="#fff" stroke-linejoin="round" />
<path d="M424.6 548.2H454V556.4H424.6z" stroke="#1c8cff" stroke-width="1.77" fill="#fff" stroke-linejoin="round" />
<path d="M424.6 560H454V568.2H424.6z" stroke="#1c8cff" stroke-width="1.77" fill="#fff" stroke-linejoin="round" />
<path d="M426.6 551H452 M426.6 565.6H452" stroke="#1c8cff" stroke-width="1.3" fill="none" stroke-linejoin="round" />
<path d="M422.6 558.2H456.4" stroke="#1e1e1e" stroke-width="1.38" fill="none" />
<path d="M422 558.2h34 M428.6 547v3 M450 547v3 M428.6 566.6v3 M450 566.6v3" stroke="#ff8a1a" stroke-width="0.92" fill="none" />
<path d="M433 568.2H446V575H433z" stroke="#1c8cff" stroke-width="1.53" fill="#fff" stroke-linejoin="round" />
<path d="M425.8 574.6H453.4V580.6H425.8z" stroke="#1c8cff" stroke-width="1.65" fill="#fff" stroke-linejoin="round" />
<path d="M425.8 621H453.4V627H425.8z" stroke="#1c8cff" stroke-width="1.65" fill="#fff" stroke-linejoin="round" />
<path d="M405.4 578.4H501.2V623.6H405.4z" stroke="#1c8cff" stroke-width="1.77" fill="#fff" stroke-linejoin="round" />
<path d="M403.6 596c-1.4 2-1.4 8 0 10" stroke="#1c8cff" stroke-width="1.53" fill="none" stroke-linejoin="round" />
<path d="M411.4 584.4H428V616.4H411.4z" stroke="#1c8cff" stroke-width="1.53" fill="none" stroke-linejoin="round" />
<path d="M411.4 598.2H428 M411.4 604.2H428 M408 578.4V623.6" stroke="#1c8cff" stroke-width="1.42" fill="none" stroke-linejoin="round" />
<path d="M428 578.4V623.6 M432.6 578.4V623.6" stroke="#1c8cff" stroke-width="1.53" fill="none" stroke-linejoin="round" />
<path d="M452.4 580L444.6 587.4V615.4L452.4 622.6 M453.4 578.4V623.6" stroke="#1c8cff" stroke-width="1.53" fill="none" stroke-linejoin="round" />
<path d="M438.4 587.4H441.4V616H438.4z" stroke="#1c8cff" stroke-width="1.3" fill="none" stroke-linejoin="round" />
<path d="M461.4 578.4V623.6 M497 578.4V623.6 M499 581V621" stroke="#1c8cff" stroke-width="1.53" fill="none" stroke-linejoin="round" />
<path d="M481.6 593.8H496.6V608.6H481.6z" stroke="#1c8cff" stroke-width="1.53" fill="#fff" stroke-linejoin="round" />
<path d="M488 593.8v-5c0-1.6 2.4-1.6 2.4 0v5" stroke="#1c8cff" stroke-width="1.3" fill="none" stroke-linejoin="round" />
<path d="M459.6 574.4H491.4V578.6H459.6z" stroke="#1c8cff" stroke-width="1.53" fill="#fff" stroke-linejoin="round" />
<path d="M467.8 572.4H470.8V581.6H467.8z" stroke="#1c8cff" stroke-width="1.3" fill="#fff" stroke-linejoin="round" />
<path d="M487 572.4H490V581.6H487z" stroke="#1c8cff" stroke-width="1.3" fill="#fff" stroke-linejoin="round" />
<path d="M472 576.4h14" stroke="#ff8a1a" stroke-width="1.03" fill="none" />
<path d="M466 623.6l13 8.6 11.6-8.6" stroke="#1c8cff" stroke-width="1.65" fill="#fff" stroke-linejoin="round" />
<path d="M459.6 623.6v3.4h7" stroke="#1c8cff" stroke-width="1.3" fill="none" stroke-linejoin="round" />
<path d="M501.2 590v22.4 M503.4 592V610 M501.2 596.6h8 M501.2 606.2h8" stroke="#1c8cff" stroke-width="1.42" fill="none" stroke-linejoin="round" />
<path d="M509.2 583c0-4.6 6.8-4.6 6.8 0V620c0 4.6-6.8 4.6-6.8 0z" stroke="#1c8cff" stroke-width="1.65" fill="#fff" stroke-linejoin="round" />
<path d="M511 580.6V622.4 M512.8 580V623 M514.4 580.6V622.4" stroke="#1c8cff" stroke-width="1.3" fill="none" stroke-linejoin="round" />
<path d="M516 597.4h3l3 4-3 4h-3" stroke="#1c8cff" stroke-width="1.53" fill="#fff" stroke-linejoin="round" />
<path d="M510 580.4h5 M510 622.6h5" stroke="#ff8a1a" stroke-width="0.92" fill="none" />
<path d="M439.4 392V576.6 M443.4 601.4H520.6" stroke="#ff8a1a" stroke-width="1.03" fill="none" />
<path d="M436.4 506h6" stroke="#ff8a1a" stroke-width="1.03" fill="none" />
<path d="M403.4 581h6 M406.4 578v6" stroke="#ff8a1a" stroke-width="1.03" fill="none" />
<path d="M405.4 589.6h6 M408.4 586.6v6" stroke="#ff8a1a" stroke-width="1.03" fill="none" />
<path d="M405.4 613.4h6 M408.4 610.4v6" stroke="#ff8a1a" stroke-width="1.03" fill="none" />
<path d="M423.4 581.8h6 M426.4 578.8v6" stroke="#ff8a1a" stroke-width="1.03" fill="none" />
<path d="M428.4 592.6h6 M431.4 589.6v6" stroke="#ff8a1a" stroke-width="1.03" fill="none" />
<path d="M423.4 621h6 M426.4 618v6" stroke="#ff8a1a" stroke-width="1.03" fill="none" />
<path d="M476 628.4h6 M479 625.4v6" stroke="#ff8a1a" stroke-width="1.03" fill="none" />
<path d="M404.4 601.4h3 M440 587.6h3 M440 615.4h3" stroke="#ff8a1a" stroke-width="1.03" fill="none" />
<path d="M384.4 394V631.4 M384.4 394H483.4 M384.4 631.4H481.6 M482.4 380V516.6 M460 401.4H484.4 M470 418H484.4 M470 516.6H484.4" stroke="#1e1e1e" stroke-width="1.0" fill="none" />
<path d="M384.4 394l-.9 3h1.8z M384.4 631.4l-.9-3h1.8z M482.4 394l-.9-3h1.8z M482.4 401.4l-.9 3h1.8z M482.4 418l-.9-3h1.8z M482.4 418.4l-.9 3h1.8z M482.4 516.6l-.9-3h1.8z" stroke="#1e1e1e" stroke-width="0.5" fill="#1e1e1e" />
<text x="382" y="514" font-size="5.2" fill="#2a2a2a" textLength="10.6" lengthAdjust="spacingAndGlyphs" font-style="italic" text-anchor="middle" transform="rotate(-90 382 514)">1190</text>
<text x="480.2" y="388" font-size="4.6" fill="#2a2a2a" textLength="4.9" lengthAdjust="spacingAndGlyphs" font-style="italic" text-anchor="middle" transform="rotate(-90 480.2 388)">25</text>
<text x="480.2" y="410" font-size="4.6" fill="#2a2a2a" textLength="4.9" lengthAdjust="spacingAndGlyphs" font-style="italic" text-anchor="middle" transform="rotate(-90 480.2 410)">85</text>
<text x="480.2" y="467" font-size="5.2" fill="#2a2a2a" textLength="8.2" lengthAdjust="spacingAndGlyphs" font-style="italic" text-anchor="middle" transform="rotate(-90 480.2 467)">560</text>
<text x="573.6" y="386.6" font-size="4.8" fill="#2a2a2a" textLength="110.8" lengthAdjust="spacingAndGlyphs" font-style="italic" >План расположения отверстий под фундаментные болты</text>
<path d="M573.6 401.4V622.4 M572 401.4H610 M572 533.6H610 M572 579.4H597 M572 622.4H597" stroke="#1e1e1e" stroke-width="1.0" fill="none" />
<path d="M609.6 507V533.6 M649 507V533.6 M609.6 509.4H649 M615.6 520V533.6 M642.4 520V533.6 M615.6 522H642.4" stroke="#1e1e1e" stroke-width="1.0" fill="none" />
<path d="M612.4 536V557.4 M645.6 536V557.4 M588 556.4H646 M600 554V588 M600 567.4H686.4 M686.4 565V588" stroke="#1e1e1e" stroke-width="1.0" fill="none" />
<path d="M591 584V619.4 M591 584H597.4 M591 619.4H597.4 M623.6 575.6V626.4 M600 575.6H624.4 M603 626.4H624.4" stroke="#1e1e1e" stroke-width="1.0" fill="none" />
<path d="M604.4 623V640 M682 623V640 M604.4 637.6H682 M595.6 619V650 M691.6 619V650 M595.6 648H691.6" stroke="#1e1e1e" stroke-width="1.0" fill="none" />
<path d="M573.6 401.4l-0.9 2.8h1.8z M573.6 533.6l-0.9 -2.8h1.8z M573.6 579.4l-0.9 -2.8h1.8z M573.6 622.4l-0.9 -2.8h1.8z M573.6 533.6l-0.9 2.8h1.8z M573.6 579.4l-0.9 2.8h1.8z M609.6 509.4l2.8 -0.9v1.8z M649 509.4l-2.8 -0.9v1.8z M615.6 522l2.8 -0.9v1.8z M642.4 522l-2.8 -0.9v1.8z M600 556.4l-2.8 -0.9v1.8z M612.4 556.4l2.8 -0.9v1.8z M612.4 556.4l-2.8 -0.9v1.8z M645.6 556.4l-2.8 -0.9v1.8z M608 556.4l-2.8 -0.9v1.8z M616 556.4l2.8 -0.9v1.8z M600 567.4l2.8 -0.9v1.8z M686.4 567.4l-2.8 -0.9v1.8z M591 584l-0.9 2.8h1.8z M591 619.4l-0.9 -2.8h1.8z M623.6 575.6l-0.9 2.8h1.8z M623.6 626.4l-0.9 -2.8h1.8z M604.4 637.6l2.8 -0.9v1.8z M682 637.6l-2.8 -0.9v1.8z M595.6 648l2.8 -0.9v1.8z M691.6 648l-2.8 -0.9v1.8z" stroke="#1e1e1e" stroke-width="0.4" fill="#1e1e1e" />
<path d="M609.5 397.9H616.5V404.9H609.5z" stroke="#1c8cff" stroke-width="1.77" fill="#fff" stroke-linejoin="round" />
<path d="M609.6 401.4h6.8 M613 398.0v6.8" stroke="#1e1e1e" stroke-width="1.0" fill="none" />
<path d="M642.1 397.9H649.1V404.9H642.1z" stroke="#1c8cff" stroke-width="1.77" fill="#fff" stroke-linejoin="round" />
<path d="M642.2 401.4h6.8 M645.6 398.0v6.8" stroke="#1e1e1e" stroke-width="1.0" fill="none" />
<path d="M609.5 530.1H616.5V537.1H609.5z" stroke="#1c8cff" stroke-width="1.77" fill="#fff" stroke-linejoin="round" />
<path d="M609.6 533.6h6.8 M613 530.2v6.8" stroke="#1e1e1e" stroke-width="1.0" fill="none" />
<path d="M642.1 530.1H649.1V537.1H642.1z" stroke="#1c8cff" stroke-width="1.77" fill="#fff" stroke-linejoin="round" />
<path d="M642.2 533.6h6.8 M645.6 530.2v6.8" stroke="#1e1e1e" stroke-width="1.0" fill="none" />
<path d="M596.5 575.9H603.5V582.9H596.5z" stroke="#1c8cff" stroke-width="1.77" fill="#fff" stroke-linejoin="round" />
<path d="M596.6 579.4h6.8 M600 576.0v6.8" stroke="#1e1e1e" stroke-width="1.0" fill="none" />
<path d="M682.9 575.9H689.9V582.9H682.9z" stroke="#1c8cff" stroke-width="1.77" fill="#fff" stroke-linejoin="round" />
<path d="M683.0 579.4h6.8 M686.4 576.0v6.8" stroke="#1e1e1e" stroke-width="1.0" fill="none" />
<path d="M596.5 619.5H603.5V626.5H596.5z" stroke="#1c8cff" stroke-width="1.77" fill="#fff" stroke-linejoin="round" />
<path d="M596.6 623h6.8 M600 619.6v6.8" stroke="#1e1e1e" stroke-width="1.0" fill="none" />
<path d="M682.9 619.5H689.9V626.5H682.9z" stroke="#1c8cff" stroke-width="1.77" fill="#fff" stroke-linejoin="round" />
<path d="M683.0 623h6.8 M686.4 619.6v6.8" stroke="#1e1e1e" stroke-width="1.0" fill="none" />
<text x="571.4" y="467" font-size="5.2" fill="#2a2a2a" textLength="8.2" lengthAdjust="spacingAndGlyphs" font-style="italic" text-anchor="middle" transform="rotate(-90 571.4 467)">625</text>
<text x="571.4" y="557" font-size="5.2" fill="#2a2a2a" textLength="5.5" lengthAdjust="spacingAndGlyphs" font-style="italic" text-anchor="middle" transform="rotate(-90 571.4 557)">70</text>
<text x="571.4" y="601" font-size="5.2" fill="#2a2a2a" textLength="8.2" lengthAdjust="spacingAndGlyphs" font-style="italic" text-anchor="middle" transform="rotate(-90 571.4 601)">230</text>
<text x="630" y="507.6" font-size="5.2" fill="#2a2a2a" textLength="8.2" lengthAdjust="spacingAndGlyphs" font-style="italic" text-anchor="middle" >160</text>
<text x="629" y="520.2" font-size="5.2" fill="#2a2a2a" textLength="7.9" lengthAdjust="spacingAndGlyphs" font-style="italic" text-anchor="middle" >115</text>
<text x="593" y="554.6" font-size="5.2" fill="#2a2a2a" textLength="5.5" lengthAdjust="spacingAndGlyphs" font-style="italic" text-anchor="middle" >61</text>
<text x="629" y="554.6" font-size="5.2" fill="#2a2a2a" textLength="5.5" lengthAdjust="spacingAndGlyphs" font-style="italic" text-anchor="middle" >55</text>
<text x="642.6" y="565.6" font-size="5.2" fill="#2a2a2a" textLength="8.2" lengthAdjust="spacingAndGlyphs" font-style="italic" text-anchor="middle" >450</text>
<text x="588.8" y="602" font-size="5.2" fill="#2a2a2a" textLength="8.2" lengthAdjust="spacingAndGlyphs" font-style="italic" text-anchor="middle" transform="rotate(-90 588.8 602)">160</text>
<text x="621.4" y="601" font-size="5.2" fill="#2a2a2a" textLength="8.2" lengthAdjust="spacingAndGlyphs" font-style="italic" text-anchor="middle" transform="rotate(-90 621.4 601)">215</text>
<text x="649" y="635.8" font-size="5.2" fill="#2a2a2a" textLength="8.2" lengthAdjust="spacingAndGlyphs" font-style="italic" text-anchor="middle" >360</text>
<text x="637" y="646.2" font-size="5.2" fill="#2a2a2a" textLength="8.2" lengthAdjust="spacingAndGlyphs" font-style="italic" text-anchor="middle" >476</text>
<text x="870.4" y="474" font-size="5.8" fill="#2a2a2a" textLength="59.6" lengthAdjust="spacingAndGlyphs" font-weight="bold" font-style="italic" >Технические требования</text>
<text x="827" y="487.8" font-size="4.6" fill="#2a2a2a" textLength="127.5" lengthAdjust="spacingAndGlyphs" font-style="italic" >1. Смещение валов электродвигателя и редуктора, не более:</text>
<text x="832" y="493.4" font-size="4.6" fill="#2a2a2a" textLength="14.0" lengthAdjust="spacingAndGlyphs" font-style="italic" >осевое</text>
<line x1="847" y1="493" x2="939" y2="493" stroke="#555" stroke-width="0.5" />
<text x="832" y="499.2" font-size="4.6" fill="#2a2a2a" textLength="24.0" lengthAdjust="spacingAndGlyphs" font-style="italic" >радиальное</text>
<line x1="857" y1="498.8" x2="939" y2="498.8" stroke="#555" stroke-width="0.5" />
<text x="832" y="504.8" font-size="4.6" fill="#2a2a2a" textLength="15.6" lengthAdjust="spacingAndGlyphs" font-style="italic" >угловое</text>
<line x1="849" y1="504.4" x2="939" y2="504.4" stroke="#555" stroke-width="0.5" />
<text x="827" y="511.8" font-size="4.6" fill="#2a2a2a" textLength="117.0" lengthAdjust="spacingAndGlyphs" font-style="italic" >2. Радиальная консольная нагрузка на выходном валу</text>
<text x="832" y="518" font-size="4.6" fill="#2a2a2a" textLength="36.0" lengthAdjust="spacingAndGlyphs" font-style="italic" >не более 5025 Н.</text>
<text x="827" y="524" font-size="4.6" fill="#2a2a2a" textLength="129.0" lengthAdjust="spacingAndGlyphs" font-style="italic" >3. Привод допускается эксплуатировать при температуре</text>
<text x="832" y="531" font-size="4.6" fill="#2a2a2a" textLength="20.0" lengthAdjust="spacingAndGlyphs" font-style="italic" >1 = 0,95 h</text>
<text x="861.8" y="547.6" font-size="5.8" fill="#2a2a2a" textLength="70.8" lengthAdjust="spacingAndGlyphs" font-weight="bold" font-style="italic" >Техническая характеристика</text>
<text x="827" y="560" font-size="4.6" fill="#2a2a2a" textLength="74.0" lengthAdjust="spacingAndGlyphs" font-style="italic" >1.  Окружное усилие на барабане,  кН</text>
<line x1="902" y1="559.7" x2="943.0" y2="559.7" stroke="#555" stroke-width="0.5" />
<text x="943.6" y="560" font-size="4.6" fill="#2a2a2a" textLength="5.4" lengthAdjust="spacingAndGlyphs" font-style="italic" >2,8</text>
<text x="827" y="566.2" font-size="4.6" fill="#2a2a2a" textLength="92.0" lengthAdjust="spacingAndGlyphs" font-style="italic" >2. Скорость движения ленты конвейера, м/с</text>
<line x1="920" y1="565.9000000000001" x2="943.0" y2="565.9000000000001" stroke="#555" stroke-width="0.5" />
<text x="943.6" y="566.2" font-size="4.6" fill="#2a2a2a" textLength="5.4" lengthAdjust="spacingAndGlyphs" font-style="italic" >2,9</text>
<text x="827" y="572.3" font-size="4.6" fill="#2a2a2a" textLength="84.0" lengthAdjust="spacingAndGlyphs" font-style="italic" >3. Общее передаточное число привода</text>
<line x1="912" y1="572.0" x2="940.0" y2="572.0" stroke="#555" stroke-width="0.5" />
<text x="940.6" y="572.3" font-size="4.6" fill="#2a2a2a" textLength="8.4" lengthAdjust="spacingAndGlyphs" font-style="italic" >4,64</text>
<text x="827" y="578.4" font-size="4.6" fill="#2a2a2a" textLength="78.0" lengthAdjust="spacingAndGlyphs" font-style="italic" >4. Мощность электродвигателя, кВт</text>
<line x1="906" y1="578.1" x2="945.0" y2="578.1" stroke="#555" stroke-width="0.5" />
<text x="945.6" y="578.4" font-size="4.6" fill="#2a2a2a" textLength="2.2" lengthAdjust="spacingAndGlyphs" font-style="italic" >3</text>
<text x="827" y="584.8" font-size="4.6" fill="#2a2a2a" textLength="104.0" lengthAdjust="spacingAndGlyphs" font-style="italic" >5. Частота вращения электродвигателя, мин⁻¹</text>
<line x1="932" y1="584.5" x2="939.8" y2="584.5" stroke="#555" stroke-width="0.5" />
<text x="940.4" y="584.8" font-size="4.6" fill="#2a2a2a" textLength="9.6" lengthAdjust="spacingAndGlyphs" font-style="italic" >2880</text>
<defs>
<linearGradient id="tb" x1="0" y1="0" x2="0" y2="1"><stop offset="0" stop-color="#9fb4e2"/><stop offset=".12" stop-color="#86a0d8"/><stop offset=".5" stop-color="#8aa4da"/><stop offset="1" stop-color="#8fa8dc"/></linearGradient>
<linearGradient id="btn" x1="0" y1="0" x2="0" y2="1"><stop offset="0" stop-color="#c3d0ee"/><stop offset=".45" stop-color="#a9bbe5"/><stop offset=".5" stop-color="#9db1e0"/><stop offset="1" stop-color="#a6b9e4"/></linearGradient>
<linearGradient id="btna" x1="0" y1="0" x2="0" y2="1"><stop offset="0" stop-color="#dbe3f5"/><stop offset=".45" stop-color="#c3cfee"/><stop offset=".5" stop-color="#b4c3e9"/><stop offset="1" stop-color="#bccaec"/></linearGradient>
<linearGradient id="btnw" x1="0" y1="0" x2="0" y2="1"><stop offset="0" stop-color="#fbefc4"/><stop offset=".45" stop-color="#f5dc98"/><stop offset=".5" stop-color="#efd184"/><stop offset="1" stop-color="#f3dc9c"/></linearGradient>
<radialGradient id="orb" cx=".5" cy=".35" r=".7"><stop offset="0" stop-color="#7fb6ea"/><stop offset=".6" stop-color="#2d6cc0"/><stop offset="1" stop-color="#173f86"/></radialGradient>
<linearGradient id="stm" x1="0" y1="0" x2="0" y2="1"><stop offset="0" stop-color="#111d3a"/><stop offset="1" stop-color="#1a4a7a"/></linearGradient>
</defs>
<rect x="0" y="768" width="1000" height="32" fill="url(#tb)" />
<line x1="0" y1="768.4" x2="1000" y2="768.4" stroke="#5d6780" stroke-width="1" />
<line x1="0" y1="769.4" x2="1000" y2="769.4" stroke="#b7c6ea" stroke-width="0.9" />
<filter id="bl" x="-10%" y="-50%" width="120%" height="200%"><feGaussianBlur stdDeviation="2.2"/></filter>
<g filter="url(#bl)">
<rect x="545" y="772" width="150" height="11" fill="#a6bbe8" opacity=".55"/>
<rect x="528" y="789" width="140" height="6" fill="#5f78b4" opacity=".5"/>
<rect x="60" y="786" width="90" height="8" fill="#6f88c2" opacity=".35"/>
<rect x="540" y="776" width="70" height="4" fill="#7088c0" opacity=".3"/>
</g>
<linearGradient id="dk" x1="0" y1="0" x2="1" y2="0"><stop offset="0" stop-color="#4a62a0" stop-opacity="0"/><stop offset=".55" stop-color="#4a62a0" stop-opacity=".32"/><stop offset="1" stop-color="#4a62a0" stop-opacity=".42"/></linearGradient>
<rect x="700" y="769.8" width="300" height="30.2" fill="url(#dk)" />
<circle cx="20.6" cy="784" r="13" fill="url(#orb)" stroke="#2a4f8c" stroke-width="1.2"/>
<path d="M13 779.4c2.2-1.2 4.4-1.2 6.4.2l-1.2 4.6c-2-1.4-4.2-1.4-6.4-.2z" stroke="none" stroke-width="0" fill="#e8542c" />
<path d="M20.6 780c2 1.2 4.2 1.4 6.6.2l-1.2 4.6c-2.4 1.2-4.6 1-6.6-.2z" stroke="none" stroke-width="0" fill="#7cc142" />
<path d="M11.4 785.4c2.2-1.2 4.4-1.2 6.4.2l-1.2 4.6c-2-1.4-4.2-1.4-6.4-.2z" stroke="none" stroke-width="0" fill="#3b9be8" />
<path d="M19 786c2 1.2 4.2 1.4 6.6.2l-1.2 4.6c-2.4 1.2-4.6 1-6.6-.2z" stroke="none" stroke-width="0" fill="#f9c81e" />
<circle cx="69" cy="784" r="12" fill="#6fbf3e" stroke="#4f9a2e" stroke-width="1"/>
<text x="62.6" y="790.6" font-size="23" fill="#ffffff" textLength="13.0" lengthAdjust="spacingAndGlyphs" font-weight="bold" >µ</text>
<circle cx="118" cy="783.6" r="11" fill="#1eb2f2" stroke="#0a93d6" stroke-width="1"/>
<circle cx="111.6" cy="777.6" r="4.6" fill="#1eb2f2" stroke="none" stroke-width="0"/>
<circle cx="124.4" cy="789.8" r="4.6" fill="#1eb2f2" stroke="none" stroke-width="0"/>
<text x="112.6" y="790.6" font-size="19" fill="#ffffff" textLength="11.0" lengthAdjust="spacingAndGlyphs" font-weight="bold" >S</text>
<path d="M156.4 774.6h19.4c1.6 0 2.8 1.2 2.8 2.8v20.4l-4.6-4.2h-17.6c-1.6 0-2.8-1.2-2.8-2.8v-13.4c0-1.6 1.2-2.8 2.8-2.8z" stroke="none" stroke-width="0" fill="#7a8be0" />
<path d="M159.6 789.4c-.6-3.6 0-6.6 1.6-9.2 1.4-.8 2.8-1.2 4.2-1.2l.4 1c.2 0 .6 0 .8 0s.6 0 .8 0l.4-1c1.4 0 2.8.4 4.2 1.2 1.6 2.6 2.2 5.6 1.6 9.2-1.4 1-2.8 1.6-4 1.6l-.8-1.4c-1.4.4-2.8.4-4.4 0l-.8 1.4c-1.200 0-2.600-.600-4-1.600z" stroke="none" stroke-width="0" fill="#ffffff" />
<circle cx="163.8" cy="785.8" r="1.5" fill="#7a8be0" stroke="none" stroke-width="0"/>
<circle cx="169.4" cy="785.8" r="1.5" fill="#7a8be0" stroke="none" stroke-width="0"/>
<path d="M203 777.4c0-1 .8-1.800 1.800-1.800h8l2 2.400h11.200c1 0 1.800.8 1.800 1.800v14.800h-24.800z" stroke="#d8b24a" stroke-width="0.8" fill="#f3d983" />
<rect x="205.4" y="774.8" width="5" height="2.4" fill="#2fb84a" />
<rect x="211" y="776.2" width="3" height="1.6" fill="#e03a2a" />
<rect x="216.4" y="777.2" width="4" height="1.8" fill="#3a8ee8" />
<rect x="205.4" y="777.4" width="16" height="3" fill="#ffffff" />
<path d="M203 781.400h24.800v14.600h-24.800z" stroke="#d8b24a" stroke-width="0.8" fill="#f6e29a" />
<path d="M206.600 796v-8.600c0-1.400 1-2.400 2.400-2.400h12.400c1.400 0 2.400 1 2.400 2.400v8.600h-4.400v-4.800h-8.400v4.800z" stroke="#4a9ad6" stroke-width="0.7" fill="#8fd0f4" />
<circle cx="263" cy="784" r="12" fill="url(#stm)" stroke="#0e1830" stroke-width="0.8"/>
<circle cx="267.4" cy="780.4" r="3.6" fill="#5a6a8a" stroke="#ffffff" stroke-width="1.6"/>
<circle cx="267.4" cy="780.4" r="1.6" fill="#ffffff" stroke="none" stroke-width="0"/>
<path d="M251.6 785.600l7.600 3c1.400-1.400 3.600-1.400 5 0l3.400-4.800" stroke="#ffffff" stroke-width="2.6" fill="none" stroke-linecap="round"/>
<circle cx="260.4" cy="790" r="2.8" fill="#1a3a66" stroke="#ffffff" stroke-width="1.4"/>
<rect x="288.4" y="769.6" width="46.400000000000034" height="31" fill="url(#btn)" rx="2" stroke="#5a6a94" stroke-width="0.9"/>
<rect x="289.4" y="770.6" width="44.400000000000034" height="29.6" fill="none" rx="1.6" stroke="#e4eaf8" stroke-width="0.8" stroke-opacity=".75"/>
<rect x="337.4" y="769.6" width="46.0" height="31" fill="url(#btn)" rx="2" stroke="#5a6a94" stroke-width="0.9"/>
<rect x="338.4" y="770.6" width="44.0" height="29.6" fill="none" rx="1.6" stroke="#e4eaf8" stroke-width="0.8" stroke-opacity=".75"/>
<rect x="385.8" y="769.6" width="46.0" height="31" fill="url(#btna)" rx="2" stroke="#5a6a94" stroke-width="0.9"/>
<rect x="386.8" y="770.6" width="44.0" height="29.6" fill="none" rx="1.6" stroke="#e4eaf8" stroke-width="0.8" stroke-opacity=".75"/>
<rect x="434.2" y="769.6" width="46.400000000000034" height="31" fill="url(#btn)" rx="2" stroke="#5a6a94" stroke-width="0.9"/>
<rect x="435.2" y="770.6" width="44.400000000000034" height="29.6" fill="none" rx="1.6" stroke="#e4eaf8" stroke-width="0.8" stroke-opacity=".75"/>
<rect x="483" y="769.6" width="45.39999999999998" height="31" fill="url(#btnw)" rx="2" stroke="#5a6a94" stroke-width="0.9"/>
<rect x="484" y="770.6" width="43.39999999999998" height="29.6" fill="none" rx="1.6" stroke="#e4eaf8" stroke-width="0.8" stroke-opacity=".75"/>
<circle cx="311.6" cy="784" r="12" fill="#dd4b3e" stroke="none" stroke-width="0"/>
<path d="M311.6 784L301.20000000000005 778A12 12 0 0 0 312.8 795.94z" stroke="none" stroke-width="0" fill="#1e9c57" />
<path d="M311.6 784L312.8 795.94A12 12 0 0 0 322.40000000000003 778.8z" stroke="none" stroke-width="0" fill="#fdd23f" />
<path d="M311.6 778.6H322.5A12 12 0 0 0 301.20000000000005 778L306.6 785z" stroke="none" stroke-width="0" fill="#dd4b3e" />
<circle cx="311.6" cy="784" r="5.6" fill="#ffffff" stroke="none" stroke-width="0"/>
<circle cx="311.6" cy="784" r="4.4" fill="#4a8af4" stroke="none" stroke-width="0"/>
<path d="M360.2 796.2l-12.600-11.600v-6.400l5-5h4.200l3.400 3.400 3.400-3.400h4.200l5 5v6.400z" stroke="none" stroke-width="0" fill="#1a84e4" />
<path d="M360.2 796.2v-19.600l3.400-3.400h4.200l5 5v6.400z" stroke="none" stroke-width="0" fill="#0a6cd0" />
<path d="M347.6 778.200l5-5h4.200l3.400 3.400v6z" stroke="none" stroke-width="0" fill="#3a9af0" />
<rect x="396.2" y="772.2" width="24.4" height="23.6" fill="#25272c" stroke="#1ab0ee" stroke-width="1.2"/>
<circle cx="408.4" cy="784" r="8.6" fill="none" stroke="#1ab0ee" stroke-width="1.5"/>
<path d="M404.6 777.400V790.800 M404.6 784.600L413.400 777.200 M406.400 783.200L414.200 791 M409 781L416 787.600" stroke="#1ab0ee" stroke-width="1.5" fill="none" />
<path d="M446 777.6l3.400-2.400h20.400l-1 2.400 1 3.600-3.400 2.200h-20.400z" stroke="#3a2a2a" stroke-width="0.5" fill="#b04ab8" />
<path d="M446 777.6h20.400l3.400-2.400" stroke="#7a2a86" stroke-width="0.8" fill="none" />
<rect x="447" y="781.6" width="19" height="1.2" fill="#f0e8d0" />
<path d="M446 783.8000000000001l3.400-2.400h20.400l-1 2.400 1 3.600-3.400 2.200h-20.400z" stroke="#3a2a2a" stroke-width="0.5" fill="#3a5ad8" />
<path d="M446 783.8000000000001h20.400l3.400-2.400" stroke="#22348e" stroke-width="0.8" fill="none" />
<rect x="447" y="787.8000000000001" width="19" height="1.2" fill="#f0e8d0" />
<path d="M446 790.0l3.400-2.400h20.400l-1 2.400 1 3.600-3.400 2.200h-20.400z" stroke="#3a2a2a" stroke-width="0.5" fill="#3aa83a" />
<path d="M446 790.0h20.400l3.400-2.400" stroke="#1e6e22" stroke-width="0.8" fill="none" />
<rect x="447" y="794.0" width="19" height="1.2" fill="#f0e8d0" />
<rect x="457.4" y="774.2" width="3.4" height="21.6" fill="#c8963a" stroke="#7a5a1a" stroke-width="0.5"/>
<rect x="456.6" y="783.2" width="5" height="4" fill="#d8d8d8" stroke="#555" stroke-width="0.5" rx="1"/>
<path d="M504 773.600h13.600c.6 0 1 .4 1 1v18.800c0 .6-.4 1-1 1h-13.600z" stroke="#9ab0d8" stroke-width="0.7" fill="#ffffff" />
<line x1="508.4" y1="777.4" x2="516.4" y2="777.4" stroke="#2b579a" stroke-width="1.1" />
<line x1="508.4" y1="780.2" x2="516.4" y2="780.2" stroke="#2b579a" stroke-width="1.1" />
<line x1="508.4" y1="783" x2="516.4" y2="783" stroke="#2b579a" stroke-width="1.1" />
<line x1="508.4" y1="785.8" x2="516.4" y2="785.8" stroke="#2b579a" stroke-width="1.1" />
<line x1="508.4" y1="788.6" x2="516.4" y2="788.6" stroke="#2b579a" stroke-width="1.1" />
<line x1="508.4" y1="791.4" x2="516.4" y2="791.4" stroke="#2b579a" stroke-width="1.1" />
<path d="M493.600 774.600l14-2.600v24l-14-2.600z" stroke="none" stroke-width="0" fill="#2b579a" />
<text x="495.4" y="788.2" font-size="10.5" fill="#ffffff" textLength="10.4" lengthAdjust="spacingAndGlyphs" font-weight="bold" >W</text>
<text x="779.4" y="790.4" font-size="9" fill="#ffffff" textLength="11.0" lengthAdjust="spacingAndGlyphs" >RU</text>
<rect x="799.4" y="779.4" width="11" height="8" fill="#3a3a3a" stroke="#ddd" stroke-width="0.6"/>
<path d="M801 785.600l3-3 2 2 3-3" stroke="#6c3" stroke-width="1.1" fill="none" />
<circle cx="822.6" cy="785.6" r="4.6" fill="#9ab" stroke="#e8e8e8" stroke-width="1"/>
<circle cx="842.4" cy="785.6" r="4.6" fill="#2a9ad8" stroke="#e8f4ff" stroke-width="1.2"/>
<rect x="839.6" y="783" width="5.6" height="5" fill="#ffffff" />
<path d="M857 785.600l2.600 3 4.400-6" stroke="#2fae3a" stroke-width="2" fill="none" />
<path d="M874.6 779.4h7v10h-7z" stroke="#ffffff" stroke-width="1" fill="#cfd8ea" />
<path d="M877.800 782v6.400" stroke="#fff" stroke-width="1" fill="none" />
<rect x="893.0" y="787.6" width="1.6" height="2.4" fill="#ffffff" />
<rect x="895.6" y="786.2" width="1.6" height="3.8" fill="#ffffff" />
<rect x="898.2" y="784.8" width="1.6" height="5.2" fill="#ffffff" />
<rect x="900.8" y="783.4" width="1.6" height="6.6" fill="#ffffff" />
<rect x="903.4" y="782" width="1.6" height="8" fill="#ffffff" />
<path d="M908 782.800l3 2.800-3 2.800z M912.6 781.600c2 2 2 6 0 8" stroke="#fff" stroke-width="1" fill="#fff" />
<text x="948" y="781.8" font-size="9.6" fill="#ffffff" textLength="20.4" lengthAdjust="spacingAndGlyphs" >20:42</text>
<text x="937.6" y="795.2" font-size="9.6" fill="#ffffff" textLength="41.6" lengthAdjust="spacingAndGlyphs" >12.03.2020</text>
<rect x="989.4" y="769.6" width="10.6" height="30.4" fill="#5d75ad" stroke="#a8b8de" stroke-width="0.9"/>
<text x="707" y="791.6" font-size="64" fill="#f7941d" fill-opacity=".86" stroke="#f7941d" stroke-opacity=".8" stroke-width="1.5" textLength="95" lengthAdjust="spacingAndGlyphs" font-family="Liberation Serif, serif" font-weight="bold" font-style="italic" stroke-linejoin="round">Stud</text>
<text x="803" y="791.6" font-size="64" fill="#4bab32" fill-opacity=".84" stroke="#4bab32" stroke-opacity=".8" stroke-width="1.5" textLength="88" lengthAdjust="spacingAndGlyphs" font-family="Liberation Serif, serif" font-weight="bold" font-style="italic" stroke-linejoin="round">Izba</text>
<text x="893" y="791.6" font-size="64" fill="#a4a4a4" fill-opacity=".72" stroke="#a4a4a4" stroke-opacity=".6" stroke-width="1.4" textLength="94" lengthAdjust="spacingAndGlyphs" font-family="Liberation Serif, serif" font-weight="bold" font-style="italic" stroke-linejoin="round">.com</text>
</svg>
</body></html>
